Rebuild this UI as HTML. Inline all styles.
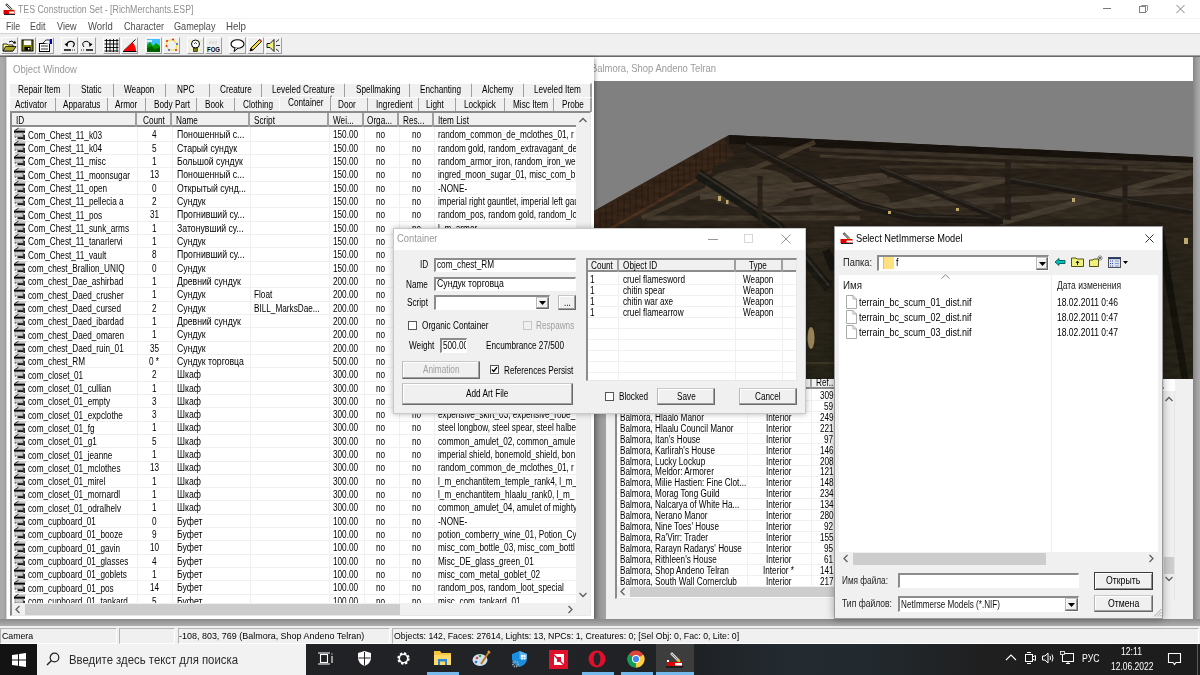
<!DOCTYPE html><html><head><meta charset="utf-8"><style>
html,body{margin:0;padding:0;width:1200px;height:675px;overflow:hidden;background:#ababab;font-family:"Liberation Sans",sans-serif;}
div,svg{position:absolute;}
.t{position:absolute;white-space:nowrap;line-height:1;transform-origin:0 0;}
svg{position:absolute;overflow:visible}
</style></head><body>
<div style="left:0px;top:0px;width:1200px;height:18px;background:#fff"></div>
<svg style="left:3px;top:3px" width="13" height="12" viewBox="0 0 13 12">
<path d="M3 1 L9 7" stroke="#333" stroke-width="2.2"/><path d="M3.5 1.5 L8.5 6.5" stroke="#ddd" stroke-width="1"/>
<path d="M8 6 L10 8" stroke="#cc0" stroke-width="1.5"/>
<rect x="0.5" y="7" width="11" height="4" fill="#e00000"/><rect x="6" y="8.5" width="5" height="2" fill="#fff"/>
<path d="M1 11.5 L12 11.5" stroke="#222" stroke-width="1"/></svg>
<div class="t" style="left:17.50px;top:4.11px;font-size:10.5px;color:#8f8f8f;transform:scaleX(0.8352);">TES Construction Set - [RichMerchants.ESP]</div>
<div style="left:1103px;top:8px;width:8px;height:1px;background:#7a7a7a"></div>
<svg style="left:1139px;top:5px" width="9" height="8" viewBox="0 0 9 8"><rect x="0.5" y="1.5" width="6" height="6" fill="none" stroke="#808080"/><path d="M1.5 1.5 L2.5 0.5 H8.5 V5.5 L6.5 7.5" fill="none" stroke="#909090"/></svg>
<svg style="left:1176px;top:5px" width="9" height="8" viewBox="0 0 9 8"><path d="M0.5 0 L8.5 8 M8.5 0 L0.5 8" stroke="#808080" stroke-width="1"/></svg>
<div style="left:0px;top:18px;width:1200px;height:1px;background:#f3f3f3"></div>
<div style="left:0px;top:19px;width:1200px;height:14px;background:#fff"></div>
<div class="t" style="left:5.60px;top:20.91px;font-size:10.5px;color:#4c4c4c;transform:scaleX(0.8281);">File</div>
<div class="t" style="left:30.40px;top:20.91px;font-size:10.5px;color:#4c4c4c;transform:scaleX(0.8566);">Edit</div>
<div class="t" style="left:57.00px;top:20.91px;font-size:10.5px;color:#4c4c4c;transform:scaleX(0.8643);">View</div>
<div class="t" style="left:87.50px;top:20.91px;font-size:10.5px;color:#4c4c4c;transform:scaleX(0.9069);">World</div>
<div class="t" style="left:123.60px;top:20.91px;font-size:10.5px;color:#4c4c4c;transform:scaleX(0.8672);">Character</div>
<div class="t" style="left:174.20px;top:20.91px;font-size:10.5px;color:#4c4c4c;transform:scaleX(0.8668);">Gameplay</div>
<div class="t" style="left:226.20px;top:20.91px;font-size:10.5px;color:#4c4c4c;transform:scaleX(0.9262);">Help</div>
<div style="left:0px;top:33px;width:1200px;height:1px;background:#d4d4d4"></div>
<div style="left:0px;top:34px;width:1200px;height:22px;background:#f0f0f0"></div>
<div style="left:0px;top:55px;width:1200px;height:1px;background:#a0a0a0"></div>
<div style="left:0px;top:56px;width:1200px;height:1px;background:#696969"></div>
<div style="left:1px;top:37px;width:17px;height:17px;box-sizing:border-box;border-top:1px solid #fff;border-left:1px solid #fff;border-right:1px solid #a0a0a0;border-bottom:1px solid #a0a0a0;background:#f0f0f0"></div>
<div style="left:19px;top:37px;width:17px;height:17px;box-sizing:border-box;border-top:1px solid #fff;border-left:1px solid #fff;border-right:1px solid #a0a0a0;border-bottom:1px solid #a0a0a0;background:#f0f0f0"></div>
<div style="left:37px;top:37px;width:17px;height:17px;box-sizing:border-box;border-top:1px solid #fff;border-left:1px solid #fff;border-right:1px solid #a0a0a0;border-bottom:1px solid #a0a0a0;background:#f0f0f0"></div>
<div style="left:61px;top:37px;width:17px;height:17px;box-sizing:border-box;border-top:1px solid #fff;border-left:1px solid #fff;border-right:1px solid #a0a0a0;border-bottom:1px solid #a0a0a0;background:#f0f0f0"></div>
<div style="left:79px;top:37px;width:17px;height:17px;box-sizing:border-box;border-top:1px solid #fff;border-left:1px solid #fff;border-right:1px solid #a0a0a0;border-bottom:1px solid #a0a0a0;background:#f0f0f0"></div>
<div style="left:103px;top:37px;width:17px;height:17px;box-sizing:border-box;border-top:1px solid #fff;border-left:1px solid #fff;border-right:1px solid #a0a0a0;border-bottom:1px solid #a0a0a0;background:#f0f0f0"></div>
<div style="left:121px;top:37px;width:17px;height:17px;box-sizing:border-box;border-top:1px solid #fff;border-left:1px solid #fff;border-right:1px solid #a0a0a0;border-bottom:1px solid #a0a0a0;background:#f0f0f0"></div>
<div style="left:145px;top:37px;width:17px;height:17px;box-sizing:border-box;border-top:1px solid #fff;border-left:1px solid #fff;border-right:1px solid #a0a0a0;border-bottom:1px solid #a0a0a0;background:#f0f0f0"></div>
<div style="left:163px;top:37px;width:17px;height:17px;box-sizing:border-box;border-top:1px solid #fff;border-left:1px solid #fff;border-right:1px solid #a0a0a0;border-bottom:1px solid #a0a0a0;background:#f0f0f0"></div>
<div style="left:187px;top:37px;width:17px;height:17px;box-sizing:border-box;border-top:1px solid #fff;border-left:1px solid #fff;border-right:1px solid #a0a0a0;border-bottom:1px solid #a0a0a0;background:#f0f0f0"></div>
<div style="left:205px;top:37px;width:17px;height:17px;box-sizing:border-box;border-top:1px solid #fff;border-left:1px solid #fff;border-right:1px solid #a0a0a0;border-bottom:1px solid #a0a0a0;background:#f0f0f0"></div>
<div style="left:229px;top:37px;width:17px;height:17px;box-sizing:border-box;border-top:1px solid #fff;border-left:1px solid #fff;border-right:1px solid #a0a0a0;border-bottom:1px solid #a0a0a0;background:#f0f0f0"></div>
<div style="left:247px;top:37px;width:17px;height:17px;box-sizing:border-box;border-top:1px solid #fff;border-left:1px solid #fff;border-right:1px solid #a0a0a0;border-bottom:1px solid #a0a0a0;background:#f0f0f0"></div>
<div style="left:265px;top:37px;width:17px;height:17px;box-sizing:border-box;border-top:1px solid #fff;border-left:1px solid #fff;border-right:1px solid #a0a0a0;border-bottom:1px solid #a0a0a0;background:#f0f0f0"></div>
<svg style="left:2px;top:38px" width="15" height="15" viewBox="0 0 15 15"><path d="M1 6 H5 L6 7 H11 V13 H1Z" fill="#ffff80" stroke="#000" stroke-width=".8"/><path d="M1 13 L3.5 8.5 H14 L11 13Z" fill="#a8a830" stroke="#000" stroke-width=".8"/><path d="M7 4 Q10 1.5 12.5 5" fill="none" stroke="#000" stroke-width="1"/><path d="M11 5.5 L14 5.5 L13 2.5Z" fill="#000"/></svg>
<svg style="left:20px;top:38px" width="15" height="15" viewBox="0 0 15 15"><rect x="2" y="2" width="11" height="11" fill="#808000" stroke="#000" stroke-width="1"/><rect x="4" y="2.5" width="7" height="4.5" fill="#fff"/><rect x="4.5" y="9" width="6" height="3.5" fill="#000"/><rect x="8" y="10" width="1.5" height="1.5" fill="#fff"/></svg>
<svg style="left:38px;top:38px" width="15" height="15" viewBox="0 0 15 15"><rect x="1.5" y="5.5" width="10" height="8" fill="#fff" stroke="#000" stroke-width="1"/><path d="M3 8 H10 M3 11 H10" stroke="#000" stroke-width=".8"/><path d="M5 5 L8 2 H12 V6" fill="#fff" stroke="#000" stroke-width=".8"/><rect x="12" y="1" width="2" height="5" fill="#0000c0"/></svg>
<svg style="left:62px;top:38px" width="15" height="15" viewBox="0 0 15 15"><path d="M4.5 7 Q6 2.5 10 3.5 Q14 5 11 9" fill="none" stroke="#000" stroke-width="1.2"/><path d="M2.5 6 L5.5 9 L6 5Z" fill="#000"/><path d="M2 12 H9" stroke="#000" stroke-width="1.5"/><path d="M10 12 H14" stroke="#000" stroke-width=".8" stroke-dasharray="1 1"/></svg>
<svg style="left:80px;top:38px" width="15" height="15" viewBox="0 0 15 15"><path d="M10.5 7 Q9 2.5 5 3.5 Q1 5 4 9" fill="none" stroke="#000" stroke-width="1"/><path d="M12.5 6 L9.5 9 L9 5Z" fill="#000"/><path d="M6 12 H13" stroke="#000" stroke-width="1.5"/><path d="M1 12 H5" stroke="#000" stroke-width=".8" stroke-dasharray="1 1"/></svg>
<svg style="left:104px;top:38px" width="15" height="15" viewBox="0 0 15 15"><path d="M2.5 1 V14 M6 1 V14 M9.5 1 V14 M13 1 V14 M0.5 2.5 H14.5 M0.5 6 H14.5 M0.5 9.5 H14.5 M0.5 13 H14.5" stroke="#000" stroke-width=".9"/></svg>
<svg style="left:122px;top:38px" width="15" height="15" viewBox="0 0 15 15"><path d="M1.5 13 L13.5 1.5" stroke="#000" stroke-width="1"/><path d="M1.5 13 H14 A12.5 12.5 0 0 0 10.5 4.5Z" fill="#ff0000"/><path d="M1 13.5 H14.5" stroke="#000" stroke-width="1"/></svg>
<svg style="left:146px;top:38px" width="15" height="15" viewBox="0 0 15 15"><rect x="1" y="1" width="13" height="13" fill="#40c0ff"/><path d="M1 14 V7 L4 4 L7 8 L10 5 L14 8 V14Z" fill="#00a000"/><path d="M1 14 V10 L5 8 L9 11 L14 9 V14Z" fill="#006000"/><path d="M1 3 H6" stroke="#fff" stroke-width="1.5"/></svg>
<svg style="left:164px;top:38px" width="15" height="15" viewBox="0 0 15 15"><path d="M3 3 L9 1.5 L13 6 L12 12 L5 12 L2.5 8Z" fill="none" stroke="#f0e040" stroke-width="1.2"/><circle cx="3" cy="3" r="1" fill="#f02020"/><circle cx="9" cy="1.5" r="1" fill="#f02020"/><circle cx="13" cy="6" r="1" fill="#3060f0"/><circle cx="12" cy="12" r="1" fill="#f02020"/><circle cx="5" cy="12" r="1" fill="#3060f0"/><circle cx="2.5" cy="8" r="1" fill="#f02020"/></svg>
<svg style="left:188px;top:38px" width="15" height="15" viewBox="0 0 15 15"><path d="M1 2 L3 4 M14 2 L12 4 M1 13 L3 11 M14 13 L12 11" stroke="#f0f060" stroke-width="1"/><circle cx="7.5" cy="6" r="4" fill="#fff" stroke="#000" stroke-width="1"/><path d="M6 6 Q7.5 3 9 6" fill="none" stroke="#000" stroke-width=".7"/><rect x="5.5" y="10" width="4" height="3.5" fill="#808000" stroke="#000" stroke-width=".6"/></svg>
<svg style="left:206px;top:38px" width="15" height="15" viewBox="0 0 15 15"><path d="M3 6 L5 3 M6 6 L8 3 M9 6 L11 3" stroke="#d8d8d8" stroke-width="1.5"/><text x="7.5" y="14" font-family="Liberation Sans" font-size="7.5" font-weight="bold" text-anchor="middle" fill="#000" textLength="13" lengthAdjust="spacingAndGlyphs">FOG</text></svg>
<svg style="left:230px;top:38px" width="15" height="15" viewBox="0 0 15 15"><ellipse cx="7.5" cy="6" rx="6.5" ry="4.3" fill="#fff" stroke="#000" stroke-width="1.1"/><path d="M5 10 L4 13.5 L8 10.2" fill="#fff" stroke="#000" stroke-width="1"/></svg>
<svg style="left:248px;top:38px" width="15" height="15" viewBox="0 0 15 15"><path d="M2 13 L3 10 L11.5 1.5 L13.5 3.5 L5 12Z" fill="#f0e030" stroke="#000" stroke-width=".9"/><path d="M11.5 1.5 L13.5 3.5" stroke="#d02020" stroke-width="1.5"/><path d="M2 13 L3 10 L5 12Z" fill="#000"/></svg>
<svg style="left:266px;top:38px" width="15" height="15" viewBox="0 0 15 15"><path d="M1 5.5 H4 L8 1.5 V13.5 L4 9.5 H1Z" fill="#f0f080" stroke="#000" stroke-width=".9"/><path d="M10 4 L13 1.5 M10 7.5 H14 M10 11 L13 13.5" stroke="#000" stroke-width=".8"/></svg>
<div style="left:0px;top:57px;width:1200px;height:570px;background:#ababab"></div>
<div style="left:592px;top:81px;width:15px;height:546px;background:linear-gradient(90deg,#7d7d7d,#9a9a9a 60%,#a6a6a6)"></div>
<div style="left:1193px;top:57px;width:7px;height:570px;background:linear-gradient(90deg,#858585,#a0a0a0 60%,#acacac)"></div>
<div style="left:581px;top:57px;width:612px;height:24px;background:#fff"></div>
<div class="t" style="left:590.50px;top:63.41px;font-size:10.5px;color:#9a9a9a;transform:scaleX(0.8968);">Balmora, Shop Andeno Telran</div>
<div style="left:594px;top:81px;width:599px;height:298px;background:#808080"></div>
<div style="left:606px;top:379px;width:587px;height:241px;background:#f0f0f0"></div>
<div style="left:6px;top:57px;width:588px;height:562px;background:#fff;box-shadow:1px 1px 4px rgba(0,0,0,.35)"></div>
<div style="left:6px;top:57px;width:1px;height:562px;background:#d9d9d9"></div>
<div class="t" style="left:13.00px;top:63.71px;font-size:10.5px;color:#999;transform:scaleX(0.9062);">Object Window</div>
<div style="left:7px;top:81px;width:587px;height:538px;background:#fff"></div>
<div style="left:10px;top:83px;width:61px;height:14px;box-sizing:border-box;background:#f0f0f0;border-top:1px solid #fff;border-right:2px solid #a0a0a0"></div>
<div class="t" style="left:18.00px;top:84.83px;font-size:10px;color:#000;transform:scaleX(0.8200);">Repair Item</div>
<div style="left:70px;top:83px;width:45px;height:14px;box-sizing:border-box;background:#f0f0f0;border-top:1px solid #fff;border-right:2px solid #a0a0a0"></div>
<div class="t" style="left:80.50px;top:84.83px;font-size:10px;color:#000;transform:scaleX(0.8200);">Static</div>
<div style="left:114px;top:83px;width:53px;height:14px;box-sizing:border-box;background:#f0f0f0;border-top:1px solid #fff;border-right:2px solid #a0a0a0"></div>
<div class="t" style="left:124.00px;top:84.83px;font-size:10px;color:#000;transform:scaleX(0.8200);">Weapon</div>
<div style="left:166px;top:83px;width:45px;height:14px;box-sizing:border-box;background:#f0f0f0;border-top:1px solid #fff;border-right:2px solid #a0a0a0"></div>
<div class="t" style="left:176.50px;top:84.83px;font-size:10px;color:#000;transform:scaleX(0.8200);">NPC</div>
<div style="left:210px;top:83px;width:53px;height:14px;box-sizing:border-box;background:#f0f0f0;border-top:1px solid #fff;border-right:2px solid #a0a0a0"></div>
<div class="t" style="left:220.00px;top:84.83px;font-size:10px;color:#000;transform:scaleX(0.8200);">Creature</div>
<div style="left:262px;top:83px;width:84px;height:14px;box-sizing:border-box;background:#f0f0f0;border-top:1px solid #fff;border-right:2px solid #a0a0a0"></div>
<div class="t" style="left:272.00px;top:84.83px;font-size:10px;color:#000;transform:scaleX(0.8200);">Leveled Creature</div>
<div style="left:345px;top:83px;width:66px;height:14px;box-sizing:border-box;background:#f0f0f0;border-top:1px solid #fff;border-right:2px solid #a0a0a0"></div>
<div class="t" style="left:355.50px;top:84.83px;font-size:10px;color:#000;transform:scaleX(0.8200);">Spellmaking</div>
<div style="left:410px;top:83px;width:63px;height:14px;box-sizing:border-box;background:#f0f0f0;border-top:1px solid #fff;border-right:2px solid #a0a0a0"></div>
<div class="t" style="left:420.00px;top:84.83px;font-size:10px;color:#000;transform:scaleX(0.8200);">Enchanting</div>
<div style="left:472px;top:83px;width:53px;height:14px;box-sizing:border-box;background:#f0f0f0;border-top:1px solid #fff;border-right:2px solid #a0a0a0"></div>
<div class="t" style="left:482.00px;top:84.83px;font-size:10px;color:#000;transform:scaleX(0.8200);">Alchemy</div>
<div style="left:524px;top:83px;width:68px;height:14px;box-sizing:border-box;background:#f0f0f0;border-top:1px solid #fff;border-right:2px solid #a0a0a0"></div>
<div class="t" style="left:534.00px;top:84.83px;font-size:10px;color:#000;transform:scaleX(0.8200);">Leveled Item</div>
<div style="left:10px;top:97px;width:47px;height:15px;box-sizing:border-box;background:#f0f0f0;border-top:1px solid #fff;border-right:2px solid #a0a0a0"></div>
<div class="t" style="left:15.00px;top:99.53px;font-size:10px;color:#000;transform:scaleX(0.8200);">Activator</div>
<div style="left:56px;top:97px;width:53px;height:15px;box-sizing:border-box;background:#f0f0f0;border-top:1px solid #fff;border-right:2px solid #a0a0a0"></div>
<div class="t" style="left:63.00px;top:99.53px;font-size:10px;color:#000;transform:scaleX(0.8200);">Apparatus</div>
<div style="left:108px;top:97px;width:39px;height:15px;box-sizing:border-box;background:#f0f0f0;border-top:1px solid #fff;border-right:2px solid #a0a0a0"></div>
<div class="t" style="left:115.00px;top:99.53px;font-size:10px;color:#000;transform:scaleX(0.8200);">Armor</div>
<div style="left:146px;top:97px;width:52px;height:15px;box-sizing:border-box;background:#f0f0f0;border-top:1px solid #fff;border-right:2px solid #a0a0a0"></div>
<div class="t" style="left:154.00px;top:99.53px;font-size:10px;color:#000;transform:scaleX(0.8200);">Body Part</div>
<div style="left:197px;top:97px;width:39px;height:15px;box-sizing:border-box;background:#f0f0f0;border-top:1px solid #fff;border-right:2px solid #a0a0a0"></div>
<div class="t" style="left:204.50px;top:99.53px;font-size:10px;color:#000;transform:scaleX(0.8200);">Book</div>
<div style="left:235px;top:97px;width:46px;height:15px;box-sizing:border-box;background:#f0f0f0;border-top:1px solid #fff;border-right:2px solid #a0a0a0"></div>
<div class="t" style="left:243.00px;top:99.53px;font-size:10px;color:#000;transform:scaleX(0.8200);">Clothing</div>
<div style="left:279px;top:95px;width:53px;height:17px;box-sizing:border-box;background:#f0f0f0;border-top:1px solid #fff;border-left:1px solid #fff;border-right:2px solid #a0a0a0"></div>
<div class="t" style="left:287.50px;top:97.53px;font-size:10px;color:#000;transform:scaleX(0.8200);">Container</div>
<div style="left:331px;top:97px;width:38px;height:15px;box-sizing:border-box;background:#f0f0f0;border-top:1px solid #fff;border-right:2px solid #a0a0a0"></div>
<div class="t" style="left:337.50px;top:99.53px;font-size:10px;color:#000;transform:scaleX(0.8200);">Door</div>
<div style="left:368px;top:97px;width:52px;height:15px;box-sizing:border-box;background:#f0f0f0;border-top:1px solid #fff;border-right:2px solid #a0a0a0"></div>
<div class="t" style="left:375.50px;top:99.53px;font-size:10px;color:#000;transform:scaleX(0.8200);">Ingredient</div>
<div style="left:419px;top:97px;width:38px;height:15px;box-sizing:border-box;background:#f0f0f0;border-top:1px solid #fff;border-right:2px solid #a0a0a0"></div>
<div class="t" style="left:426.00px;top:99.53px;font-size:10px;color:#000;transform:scaleX(0.8200);">Light</div>
<div style="left:456px;top:97px;width:50px;height:15px;box-sizing:border-box;background:#f0f0f0;border-top:1px solid #fff;border-right:2px solid #a0a0a0"></div>
<div class="t" style="left:464.00px;top:99.53px;font-size:10px;color:#000;transform:scaleX(0.8200);">Lockpick</div>
<div style="left:505px;top:97px;width:50px;height:15px;box-sizing:border-box;background:#f0f0f0;border-top:1px solid #fff;border-right:2px solid #a0a0a0"></div>
<div class="t" style="left:512.50px;top:99.53px;font-size:10px;color:#000;transform:scaleX(0.8200);">Misc Item</div>
<div style="left:554px;top:97px;width:38px;height:15px;box-sizing:border-box;background:#f0f0f0;border-top:1px solid #fff;border-right:2px solid #a0a0a0"></div>
<div class="t" style="left:561.50px;top:99.53px;font-size:10px;color:#000;transform:scaleX(0.8200);">Probe</div>
<div style="left:10px;top:111px;width:581px;height:505px;box-sizing:border-box;background:#fff;border-top:2px solid #8c8c8c;border-left:2px solid #8c8c8c;border-right:1px solid #e8e8e8;border-bottom:1px solid #e8e8e8"></div>
<div style="left:12px;top:113px;width:564px;height:14px;background:#f0f0f0;box-sizing:border-box;border-bottom:2px solid #8c8c8c"></div>
<div style="left:135px;top:113px;width:2px;height:14px;background:#a0a0a0"></div>
<div style="left:170px;top:113px;width:2px;height:14px;background:#a0a0a0"></div>
<div style="left:248px;top:113px;width:2px;height:14px;background:#a0a0a0"></div>
<div style="left:327px;top:113px;width:2px;height:14px;background:#a0a0a0"></div>
<div style="left:361.5px;top:113px;width:2px;height:14px;background:#a0a0a0"></div>
<div style="left:396.5px;top:113px;width:2px;height:14px;background:#a0a0a0"></div>
<div style="left:432px;top:113px;width:2px;height:14px;background:#a0a0a0"></div>
<div class="t" style="left:16.00px;top:115.63px;font-size:10px;color:#000;transform:scaleX(0.8200);">ID</div>
<div class="t" style="left:143.00px;top:115.63px;font-size:10px;color:#000;transform:scaleX(0.8200);">Count</div>
<div class="t" style="left:176.00px;top:115.63px;font-size:10px;color:#000;transform:scaleX(0.8200);">Name</div>
<div class="t" style="left:254.00px;top:115.63px;font-size:10px;color:#000;transform:scaleX(0.8200);">Script</div>
<div class="t" style="left:333.00px;top:115.63px;font-size:10px;color:#000;transform:scaleX(0.8200);">Wei...</div>
<div class="t" style="left:367.00px;top:115.63px;font-size:10px;color:#000;transform:scaleX(0.8200);">Orga...</div>
<div class="t" style="left:402.50px;top:115.63px;font-size:10px;color:#000;transform:scaleX(0.8200);">Res...</div>
<div class="t" style="left:438.00px;top:115.63px;font-size:10px;color:#000;transform:scaleX(0.8200);">Item List</div>
<div style="left:12px;top:127px;width:564px;height:476px;overflow:hidden">
<div style="left:-12px;top:-127px;width:1200px;height:675px">
<div style="left:12px;top:140.82px;width:564px;height:1px;background:#f0f0f0"></div>
<div style="left:12px;top:154.14px;width:564px;height:1px;background:#f0f0f0"></div>
<div style="left:12px;top:167.46px;width:564px;height:1px;background:#f0f0f0"></div>
<div style="left:12px;top:180.78px;width:564px;height:1px;background:#f0f0f0"></div>
<div style="left:12px;top:194.1px;width:564px;height:1px;background:#f0f0f0"></div>
<div style="left:12px;top:207.42px;width:564px;height:1px;background:#f0f0f0"></div>
<div style="left:12px;top:220.74px;width:564px;height:1px;background:#f0f0f0"></div>
<div style="left:12px;top:234.06px;width:564px;height:1px;background:#f0f0f0"></div>
<div style="left:12px;top:247.38px;width:564px;height:1px;background:#f0f0f0"></div>
<div style="left:12px;top:260.7px;width:564px;height:1px;background:#f0f0f0"></div>
<div style="left:12px;top:274.02px;width:564px;height:1px;background:#f0f0f0"></div>
<div style="left:12px;top:287.34px;width:564px;height:1px;background:#f0f0f0"></div>
<div style="left:12px;top:300.66px;width:564px;height:1px;background:#f0f0f0"></div>
<div style="left:12px;top:313.98px;width:564px;height:1px;background:#f0f0f0"></div>
<div style="left:12px;top:327.3px;width:564px;height:1px;background:#f0f0f0"></div>
<div style="left:12px;top:340.62px;width:564px;height:1px;background:#f0f0f0"></div>
<div style="left:12px;top:353.94px;width:564px;height:1px;background:#f0f0f0"></div>
<div style="left:12px;top:367.26px;width:564px;height:1px;background:#f0f0f0"></div>
<div style="left:12px;top:380.58px;width:564px;height:1px;background:#f0f0f0"></div>
<div style="left:12px;top:393.9px;width:564px;height:1px;background:#f0f0f0"></div>
<div style="left:12px;top:407.22px;width:564px;height:1px;background:#f0f0f0"></div>
<div style="left:12px;top:420.54px;width:564px;height:1px;background:#f0f0f0"></div>
<div style="left:12px;top:433.86px;width:564px;height:1px;background:#f0f0f0"></div>
<div style="left:12px;top:447.18px;width:564px;height:1px;background:#f0f0f0"></div>
<div style="left:12px;top:460.5px;width:564px;height:1px;background:#f0f0f0"></div>
<div style="left:12px;top:473.82px;width:564px;height:1px;background:#f0f0f0"></div>
<div style="left:12px;top:487.14px;width:564px;height:1px;background:#f0f0f0"></div>
<div style="left:12px;top:500.46px;width:564px;height:1px;background:#f0f0f0"></div>
<div style="left:12px;top:513.78px;width:564px;height:1px;background:#f0f0f0"></div>
<div style="left:12px;top:527.1px;width:564px;height:1px;background:#f0f0f0"></div>
<div style="left:12px;top:540.42px;width:564px;height:1px;background:#f0f0f0"></div>
<div style="left:12px;top:553.74px;width:564px;height:1px;background:#f0f0f0"></div>
<div style="left:12px;top:567.06px;width:564px;height:1px;background:#f0f0f0"></div>
<div style="left:12px;top:580.38px;width:564px;height:1px;background:#f0f0f0"></div>
<div style="left:12px;top:593.7px;width:564px;height:1px;background:#f0f0f0"></div>
<div style="left:12px;top:607.02px;width:564px;height:1px;background:#f0f0f0"></div>
<div style="left:137px;top:127px;width:1px;height:476px;background:#f0f0f0"></div>
<div style="left:172px;top:127px;width:1px;height:476px;background:#f0f0f0"></div>
<div style="left:250px;top:127px;width:1px;height:476px;background:#f0f0f0"></div>
<div style="left:329px;top:127px;width:1px;height:476px;background:#f0f0f0"></div>
<div style="left:363.5px;top:127px;width:1px;height:476px;background:#f0f0f0"></div>
<div style="left:398.5px;top:127px;width:1px;height:476px;background:#f0f0f0"></div>
<div style="left:434px;top:127px;width:1px;height:476px;background:#f0f0f0"></div>
<svg style="left:14px;top:127.60px" width="12" height="13" viewBox="0 0 12 13"><path d="M0.5 2.6 L4.5 0.2 H11.5 V2.6Z" fill="#c4c4c4"/><path d="M0.5 2.6 L4.5 0.2" stroke="#222" stroke-width="1"/><rect x="0" y="2.6" width="11" height="2.2" fill="#050505"/><rect x="0.5" y="4.8" width="9.5" height="4.6" fill="#a9a9a9"/><rect x="1.5" y="5.4" width="6.5" height="2.4" fill="#d2d2d2"/><rect x="3.5" y="9.2" width="6" height="1.9" fill="#111"/><rect x="9.3" y="6.8" width="1.6" height="5.2" fill="#151515"/><rect x="1" y="11" width="8.3" height="1.8" fill="#c6c6c6"/><rect x="0.8" y="8.6" width="1" height="1" fill="#333"/></svg>
<div class="t" style="left:27.50px;top:130.84px;font-size:10px;color:#000;transform:scaleX(0.8200);">Com_Chest_11_k03</div>
<div class="t" style="left:152.22px;top:130.44px;font-size:10px;color:#000;transform:scaleX(0.8200);">4</div>
<div class="t" style="left:177.00px;top:130.44px;font-size:10px;color:#000;transform:scaleX(0.8700);">Поношенный с...</div>
<div class="t" style="left:333.00px;top:130.44px;font-size:10px;color:#000;transform:scaleX(0.8200);">150.00</div>
<div class="t" style="left:376.24px;top:130.44px;font-size:10px;color:#000;transform:scaleX(0.8200);">no</div>
<div class="t" style="left:411.64px;top:130.44px;font-size:10px;color:#000;transform:scaleX(0.8200);">no</div>
<div class="t" style="left:438.00px;top:130.44px;font-size:10px;color:#000;transform:scaleX(0.8200);">random_common_de_mclothes_01, r</div>
<svg style="left:14px;top:140.92px" width="12" height="13" viewBox="0 0 12 13"><path d="M0.5 2.6 L4.5 0.2 H11.5 V2.6Z" fill="#c4c4c4"/><path d="M0.5 2.6 L4.5 0.2" stroke="#222" stroke-width="1"/><rect x="0" y="2.6" width="11" height="2.2" fill="#050505"/><rect x="0.5" y="4.8" width="9.5" height="4.6" fill="#a9a9a9"/><rect x="1.5" y="5.4" width="6.5" height="2.4" fill="#d2d2d2"/><rect x="3.5" y="9.2" width="6" height="1.9" fill="#111"/><rect x="9.3" y="6.8" width="1.6" height="5.2" fill="#151515"/><rect x="1" y="11" width="8.3" height="1.8" fill="#c6c6c6"/><rect x="0.8" y="8.6" width="1" height="1" fill="#333"/></svg>
<div class="t" style="left:27.50px;top:144.16px;font-size:10px;color:#000;transform:scaleX(0.8200);">Com_Chest_11_k04</div>
<div class="t" style="left:152.22px;top:143.75px;font-size:10px;color:#000;transform:scaleX(0.8200);">5</div>
<div class="t" style="left:177.00px;top:143.75px;font-size:10px;color:#000;transform:scaleX(0.8700);">Старый сундук</div>
<div class="t" style="left:333.00px;top:143.75px;font-size:10px;color:#000;transform:scaleX(0.8200);">150.00</div>
<div class="t" style="left:376.24px;top:143.75px;font-size:10px;color:#000;transform:scaleX(0.8200);">no</div>
<div class="t" style="left:411.64px;top:143.75px;font-size:10px;color:#000;transform:scaleX(0.8200);">no</div>
<div class="t" style="left:438.00px;top:143.75px;font-size:10px;color:#000;transform:scaleX(0.8200);">random gold, random_extravagant_de</div>
<svg style="left:14px;top:154.24px" width="12" height="13" viewBox="0 0 12 13"><path d="M0.5 2.6 L4.5 0.2 H11.5 V2.6Z" fill="#c4c4c4"/><path d="M0.5 2.6 L4.5 0.2" stroke="#222" stroke-width="1"/><rect x="0" y="2.6" width="11" height="2.2" fill="#050505"/><rect x="0.5" y="4.8" width="9.5" height="4.6" fill="#a9a9a9"/><rect x="1.5" y="5.4" width="6.5" height="2.4" fill="#d2d2d2"/><rect x="3.5" y="9.2" width="6" height="1.9" fill="#111"/><rect x="9.3" y="6.8" width="1.6" height="5.2" fill="#151515"/><rect x="1" y="11" width="8.3" height="1.8" fill="#c6c6c6"/><rect x="0.8" y="8.6" width="1" height="1" fill="#333"/></svg>
<div class="t" style="left:27.50px;top:157.47px;font-size:10px;color:#000;transform:scaleX(0.8200);">Com_Chest_11_misc</div>
<div class="t" style="left:152.22px;top:157.07px;font-size:10px;color:#000;transform:scaleX(0.8200);">1</div>
<div class="t" style="left:177.00px;top:157.07px;font-size:10px;color:#000;transform:scaleX(0.8700);">Большой сундук</div>
<div class="t" style="left:333.00px;top:157.07px;font-size:10px;color:#000;transform:scaleX(0.8200);">150.00</div>
<div class="t" style="left:376.24px;top:157.07px;font-size:10px;color:#000;transform:scaleX(0.8200);">no</div>
<div class="t" style="left:411.64px;top:157.07px;font-size:10px;color:#000;transform:scaleX(0.8200);">no</div>
<div class="t" style="left:438.00px;top:157.07px;font-size:10px;color:#000;transform:scaleX(0.8200);">random_armor_iron, random_iron_we</div>
<svg style="left:14px;top:167.56px" width="12" height="13" viewBox="0 0 12 13"><path d="M0.5 2.6 L4.5 0.2 H11.5 V2.6Z" fill="#c4c4c4"/><path d="M0.5 2.6 L4.5 0.2" stroke="#222" stroke-width="1"/><rect x="0" y="2.6" width="11" height="2.2" fill="#050505"/><rect x="0.5" y="4.8" width="9.5" height="4.6" fill="#a9a9a9"/><rect x="1.5" y="5.4" width="6.5" height="2.4" fill="#d2d2d2"/><rect x="3.5" y="9.2" width="6" height="1.9" fill="#111"/><rect x="9.3" y="6.8" width="1.6" height="5.2" fill="#151515"/><rect x="1" y="11" width="8.3" height="1.8" fill="#c6c6c6"/><rect x="0.8" y="8.6" width="1" height="1" fill="#333"/></svg>
<div class="t" style="left:27.50px;top:170.80px;font-size:10px;color:#000;transform:scaleX(0.8200);">Com_Chest_11_moonsugar</div>
<div class="t" style="left:149.94px;top:170.40px;font-size:10px;color:#000;transform:scaleX(0.8200);">13</div>
<div class="t" style="left:177.00px;top:170.40px;font-size:10px;color:#000;transform:scaleX(0.8700);">Поношенный с...</div>
<div class="t" style="left:333.00px;top:170.40px;font-size:10px;color:#000;transform:scaleX(0.8200);">150.00</div>
<div class="t" style="left:376.24px;top:170.40px;font-size:10px;color:#000;transform:scaleX(0.8200);">no</div>
<div class="t" style="left:411.64px;top:170.40px;font-size:10px;color:#000;transform:scaleX(0.8200);">no</div>
<div class="t" style="left:438.00px;top:170.40px;font-size:10px;color:#000;transform:scaleX(0.8200);">ingred_moon_sugar_01, misc_com_b</div>
<svg style="left:14px;top:180.88px" width="12" height="13" viewBox="0 0 12 13"><path d="M0.5 2.6 L4.5 0.2 H11.5 V2.6Z" fill="#c4c4c4"/><path d="M0.5 2.6 L4.5 0.2" stroke="#222" stroke-width="1"/><rect x="0" y="2.6" width="11" height="2.2" fill="#050505"/><rect x="0.5" y="4.8" width="9.5" height="4.6" fill="#a9a9a9"/><rect x="1.5" y="5.4" width="6.5" height="2.4" fill="#d2d2d2"/><rect x="3.5" y="9.2" width="6" height="1.9" fill="#111"/><rect x="9.3" y="6.8" width="1.6" height="5.2" fill="#151515"/><rect x="1" y="11" width="8.3" height="1.8" fill="#c6c6c6"/><rect x="0.8" y="8.6" width="1" height="1" fill="#333"/></svg>
<div class="t" style="left:27.50px;top:184.12px;font-size:10px;color:#000;transform:scaleX(0.8200);">Com_Chest_11_open</div>
<div class="t" style="left:152.22px;top:183.72px;font-size:10px;color:#000;transform:scaleX(0.8200);">0</div>
<div class="t" style="left:177.00px;top:183.72px;font-size:10px;color:#000;transform:scaleX(0.8700);">Открытый сунд...</div>
<div class="t" style="left:333.00px;top:183.72px;font-size:10px;color:#000;transform:scaleX(0.8200);">150.00</div>
<div class="t" style="left:376.24px;top:183.72px;font-size:10px;color:#000;transform:scaleX(0.8200);">no</div>
<div class="t" style="left:411.64px;top:183.72px;font-size:10px;color:#000;transform:scaleX(0.8200);">no</div>
<div class="t" style="left:438.00px;top:183.72px;font-size:10px;color:#000;transform:scaleX(0.8200);">-NONE-</div>
<svg style="left:14px;top:194.20px" width="12" height="13" viewBox="0 0 12 13"><path d="M0.5 2.6 L4.5 0.2 H11.5 V2.6Z" fill="#c4c4c4"/><path d="M0.5 2.6 L4.5 0.2" stroke="#222" stroke-width="1"/><rect x="0" y="2.6" width="11" height="2.2" fill="#050505"/><rect x="0.5" y="4.8" width="9.5" height="4.6" fill="#a9a9a9"/><rect x="1.5" y="5.4" width="6.5" height="2.4" fill="#d2d2d2"/><rect x="3.5" y="9.2" width="6" height="1.9" fill="#111"/><rect x="9.3" y="6.8" width="1.6" height="5.2" fill="#151515"/><rect x="1" y="11" width="8.3" height="1.8" fill="#c6c6c6"/><rect x="0.8" y="8.6" width="1" height="1" fill="#333"/></svg>
<div class="t" style="left:27.50px;top:197.44px;font-size:10px;color:#000;transform:scaleX(0.8200);">Com_Chest_11_pellecia a</div>
<div class="t" style="left:152.22px;top:197.03px;font-size:10px;color:#000;transform:scaleX(0.8200);">2</div>
<div class="t" style="left:177.00px;top:197.03px;font-size:10px;color:#000;transform:scaleX(0.8700);">Сундук</div>
<div class="t" style="left:333.00px;top:197.03px;font-size:10px;color:#000;transform:scaleX(0.8200);">150.00</div>
<div class="t" style="left:376.24px;top:197.03px;font-size:10px;color:#000;transform:scaleX(0.8200);">no</div>
<div class="t" style="left:411.64px;top:197.03px;font-size:10px;color:#000;transform:scaleX(0.8200);">no</div>
<div class="t" style="left:438.00px;top:197.03px;font-size:10px;color:#000;transform:scaleX(0.8200);">imperial right gauntlet, imperial left gau</div>
<svg style="left:14px;top:207.52px" width="12" height="13" viewBox="0 0 12 13"><path d="M0.5 2.6 L4.5 0.2 H11.5 V2.6Z" fill="#c4c4c4"/><path d="M0.5 2.6 L4.5 0.2" stroke="#222" stroke-width="1"/><rect x="0" y="2.6" width="11" height="2.2" fill="#050505"/><rect x="0.5" y="4.8" width="9.5" height="4.6" fill="#a9a9a9"/><rect x="1.5" y="5.4" width="6.5" height="2.4" fill="#d2d2d2"/><rect x="3.5" y="9.2" width="6" height="1.9" fill="#111"/><rect x="9.3" y="6.8" width="1.6" height="5.2" fill="#151515"/><rect x="1" y="11" width="8.3" height="1.8" fill="#c6c6c6"/><rect x="0.8" y="8.6" width="1" height="1" fill="#333"/></svg>
<div class="t" style="left:27.50px;top:210.76px;font-size:10px;color:#000;transform:scaleX(0.8200);">Com_Chest_11_pos</div>
<div class="t" style="left:149.94px;top:210.36px;font-size:10px;color:#000;transform:scaleX(0.8200);">31</div>
<div class="t" style="left:177.00px;top:210.36px;font-size:10px;color:#000;transform:scaleX(0.8700);">Прогнивший су...</div>
<div class="t" style="left:333.00px;top:210.36px;font-size:10px;color:#000;transform:scaleX(0.8200);">150.00</div>
<div class="t" style="left:376.24px;top:210.36px;font-size:10px;color:#000;transform:scaleX(0.8200);">no</div>
<div class="t" style="left:411.64px;top:210.36px;font-size:10px;color:#000;transform:scaleX(0.8200);">no</div>
<div class="t" style="left:438.00px;top:210.36px;font-size:10px;color:#000;transform:scaleX(0.8200);">random_pos, random gold, random_lo</div>
<svg style="left:14px;top:220.84px" width="12" height="13" viewBox="0 0 12 13"><path d="M0.5 2.6 L4.5 0.2 H11.5 V2.6Z" fill="#c4c4c4"/><path d="M0.5 2.6 L4.5 0.2" stroke="#222" stroke-width="1"/><rect x="0" y="2.6" width="11" height="2.2" fill="#050505"/><rect x="0.5" y="4.8" width="9.5" height="4.6" fill="#a9a9a9"/><rect x="1.5" y="5.4" width="6.5" height="2.4" fill="#d2d2d2"/><rect x="3.5" y="9.2" width="6" height="1.9" fill="#111"/><rect x="9.3" y="6.8" width="1.6" height="5.2" fill="#151515"/><rect x="1" y="11" width="8.3" height="1.8" fill="#c6c6c6"/><rect x="0.8" y="8.6" width="1" height="1" fill="#333"/></svg>
<div class="t" style="left:27.50px;top:224.08px;font-size:10px;color:#000;transform:scaleX(0.8200);">Com_Chest_11_sunk_arms</div>
<div class="t" style="left:152.22px;top:223.68px;font-size:10px;color:#000;transform:scaleX(0.8200);">1</div>
<div class="t" style="left:177.00px;top:223.68px;font-size:10px;color:#000;transform:scaleX(0.8700);">Затонувший су...</div>
<div class="t" style="left:333.00px;top:223.68px;font-size:10px;color:#000;transform:scaleX(0.8200);">150.00</div>
<div class="t" style="left:376.24px;top:223.68px;font-size:10px;color:#000;transform:scaleX(0.8200);">no</div>
<div class="t" style="left:411.64px;top:223.68px;font-size:10px;color:#000;transform:scaleX(0.8200);">no</div>
<div class="t" style="left:438.00px;top:223.68px;font-size:10px;color:#000;transform:scaleX(0.8200);">l_m_armor</div>
<svg style="left:14px;top:234.16px" width="12" height="13" viewBox="0 0 12 13"><path d="M0.5 2.6 L4.5 0.2 H11.5 V2.6Z" fill="#c4c4c4"/><path d="M0.5 2.6 L4.5 0.2" stroke="#222" stroke-width="1"/><rect x="0" y="2.6" width="11" height="2.2" fill="#050505"/><rect x="0.5" y="4.8" width="9.5" height="4.6" fill="#a9a9a9"/><rect x="1.5" y="5.4" width="6.5" height="2.4" fill="#d2d2d2"/><rect x="3.5" y="9.2" width="6" height="1.9" fill="#111"/><rect x="9.3" y="6.8" width="1.6" height="5.2" fill="#151515"/><rect x="1" y="11" width="8.3" height="1.8" fill="#c6c6c6"/><rect x="0.8" y="8.6" width="1" height="1" fill="#333"/></svg>
<div class="t" style="left:27.50px;top:237.40px;font-size:10px;color:#000;transform:scaleX(0.8200);">Com_Chest_11_tanarlervi</div>
<div class="t" style="left:152.22px;top:237.00px;font-size:10px;color:#000;transform:scaleX(0.8200);">1</div>
<div class="t" style="left:177.00px;top:237.00px;font-size:10px;color:#000;transform:scaleX(0.8700);">Сундук</div>
<div class="t" style="left:333.00px;top:237.00px;font-size:10px;color:#000;transform:scaleX(0.8200);">150.00</div>
<div class="t" style="left:376.24px;top:237.00px;font-size:10px;color:#000;transform:scaleX(0.8200);">no</div>
<div class="t" style="left:411.64px;top:237.00px;font-size:10px;color:#000;transform:scaleX(0.8200);">no</div>
<svg style="left:14px;top:247.48px" width="12" height="13" viewBox="0 0 12 13"><path d="M0.5 2.6 L4.5 0.2 H11.5 V2.6Z" fill="#c4c4c4"/><path d="M0.5 2.6 L4.5 0.2" stroke="#222" stroke-width="1"/><rect x="0" y="2.6" width="11" height="2.2" fill="#050505"/><rect x="0.5" y="4.8" width="9.5" height="4.6" fill="#a9a9a9"/><rect x="1.5" y="5.4" width="6.5" height="2.4" fill="#d2d2d2"/><rect x="3.5" y="9.2" width="6" height="1.9" fill="#111"/><rect x="9.3" y="6.8" width="1.6" height="5.2" fill="#151515"/><rect x="1" y="11" width="8.3" height="1.8" fill="#c6c6c6"/><rect x="0.8" y="8.6" width="1" height="1" fill="#333"/></svg>
<div class="t" style="left:27.50px;top:250.71px;font-size:10px;color:#000;transform:scaleX(0.8200);">Com_Chest_11_vault</div>
<div class="t" style="left:152.22px;top:250.31px;font-size:10px;color:#000;transform:scaleX(0.8200);">8</div>
<div class="t" style="left:177.00px;top:250.31px;font-size:10px;color:#000;transform:scaleX(0.8700);">Прогнивший су...</div>
<div class="t" style="left:333.00px;top:250.31px;font-size:10px;color:#000;transform:scaleX(0.8200);">150.00</div>
<div class="t" style="left:376.24px;top:250.31px;font-size:10px;color:#000;transform:scaleX(0.8200);">no</div>
<div class="t" style="left:411.64px;top:250.31px;font-size:10px;color:#000;transform:scaleX(0.8200);">no</div>
<svg style="left:14px;top:260.80px" width="12" height="13" viewBox="0 0 12 13"><path d="M0.5 2.6 L4.5 0.2 H11.5 V2.6Z" fill="#c4c4c4"/><path d="M0.5 2.6 L4.5 0.2" stroke="#222" stroke-width="1"/><rect x="0" y="2.6" width="11" height="2.2" fill="#050505"/><rect x="0.5" y="4.8" width="9.5" height="4.6" fill="#a9a9a9"/><rect x="1.5" y="5.4" width="6.5" height="2.4" fill="#d2d2d2"/><rect x="3.5" y="9.2" width="6" height="1.9" fill="#111"/><rect x="9.3" y="6.8" width="1.6" height="5.2" fill="#151515"/><rect x="1" y="11" width="8.3" height="1.8" fill="#c6c6c6"/><rect x="0.8" y="8.6" width="1" height="1" fill="#333"/></svg>
<div class="t" style="left:27.50px;top:264.03px;font-size:10px;color:#000;transform:scaleX(0.8200);">com_chest_Brallion_UNIQ</div>
<div class="t" style="left:152.22px;top:263.63px;font-size:10px;color:#000;transform:scaleX(0.8200);">0</div>
<div class="t" style="left:177.00px;top:263.63px;font-size:10px;color:#000;transform:scaleX(0.8700);">Сундук</div>
<div class="t" style="left:333.00px;top:263.63px;font-size:10px;color:#000;transform:scaleX(0.8200);">150.00</div>
<div class="t" style="left:376.24px;top:263.63px;font-size:10px;color:#000;transform:scaleX(0.8200);">no</div>
<div class="t" style="left:411.64px;top:263.63px;font-size:10px;color:#000;transform:scaleX(0.8200);">no</div>
<svg style="left:14px;top:274.12px" width="12" height="13" viewBox="0 0 12 13"><path d="M0.5 2.6 L4.5 0.2 H11.5 V2.6Z" fill="#c4c4c4"/><path d="M0.5 2.6 L4.5 0.2" stroke="#222" stroke-width="1"/><rect x="0" y="2.6" width="11" height="2.2" fill="#050505"/><rect x="0.5" y="4.8" width="9.5" height="4.6" fill="#a9a9a9"/><rect x="1.5" y="5.4" width="6.5" height="2.4" fill="#d2d2d2"/><rect x="3.5" y="9.2" width="6" height="1.9" fill="#111"/><rect x="9.3" y="6.8" width="1.6" height="5.2" fill="#151515"/><rect x="1" y="11" width="8.3" height="1.8" fill="#c6c6c6"/><rect x="0.8" y="8.6" width="1" height="1" fill="#333"/></svg>
<div class="t" style="left:27.50px;top:277.35px;font-size:10px;color:#000;transform:scaleX(0.8200);">com_chest_Dae_ashirbad</div>
<div class="t" style="left:152.22px;top:276.95px;font-size:10px;color:#000;transform:scaleX(0.8200);">1</div>
<div class="t" style="left:177.00px;top:276.95px;font-size:10px;color:#000;transform:scaleX(0.8700);">Древний сундук</div>
<div class="t" style="left:333.00px;top:276.95px;font-size:10px;color:#000;transform:scaleX(0.8200);">200.00</div>
<div class="t" style="left:376.24px;top:276.95px;font-size:10px;color:#000;transform:scaleX(0.8200);">no</div>
<div class="t" style="left:411.64px;top:276.95px;font-size:10px;color:#000;transform:scaleX(0.8200);">no</div>
<svg style="left:14px;top:287.44px" width="12" height="13" viewBox="0 0 12 13"><path d="M0.5 2.6 L4.5 0.2 H11.5 V2.6Z" fill="#c4c4c4"/><path d="M0.5 2.6 L4.5 0.2" stroke="#222" stroke-width="1"/><rect x="0" y="2.6" width="11" height="2.2" fill="#050505"/><rect x="0.5" y="4.8" width="9.5" height="4.6" fill="#a9a9a9"/><rect x="1.5" y="5.4" width="6.5" height="2.4" fill="#d2d2d2"/><rect x="3.5" y="9.2" width="6" height="1.9" fill="#111"/><rect x="9.3" y="6.8" width="1.6" height="5.2" fill="#151515"/><rect x="1" y="11" width="8.3" height="1.8" fill="#c6c6c6"/><rect x="0.8" y="8.6" width="1" height="1" fill="#333"/></svg>
<div class="t" style="left:27.50px;top:290.68px;font-size:10px;color:#000;transform:scaleX(0.8200);">com_chest_Daed_crusher</div>
<div class="t" style="left:152.22px;top:290.28px;font-size:10px;color:#000;transform:scaleX(0.8200);">1</div>
<div class="t" style="left:177.00px;top:290.28px;font-size:10px;color:#000;transform:scaleX(0.8700);">Сундук</div>
<div class="t" style="left:254.00px;top:290.28px;font-size:10px;color:#000;transform:scaleX(0.8200);">Float</div>
<div class="t" style="left:333.00px;top:290.28px;font-size:10px;color:#000;transform:scaleX(0.8200);">200.00</div>
<div class="t" style="left:376.24px;top:290.28px;font-size:10px;color:#000;transform:scaleX(0.8200);">no</div>
<div class="t" style="left:411.64px;top:290.28px;font-size:10px;color:#000;transform:scaleX(0.8200);">no</div>
<svg style="left:14px;top:300.76px" width="12" height="13" viewBox="0 0 12 13"><path d="M0.5 2.6 L4.5 0.2 H11.5 V2.6Z" fill="#c4c4c4"/><path d="M0.5 2.6 L4.5 0.2" stroke="#222" stroke-width="1"/><rect x="0" y="2.6" width="11" height="2.2" fill="#050505"/><rect x="0.5" y="4.8" width="9.5" height="4.6" fill="#a9a9a9"/><rect x="1.5" y="5.4" width="6.5" height="2.4" fill="#d2d2d2"/><rect x="3.5" y="9.2" width="6" height="1.9" fill="#111"/><rect x="9.3" y="6.8" width="1.6" height="5.2" fill="#151515"/><rect x="1" y="11" width="8.3" height="1.8" fill="#c6c6c6"/><rect x="0.8" y="8.6" width="1" height="1" fill="#333"/></svg>
<div class="t" style="left:27.50px;top:303.99px;font-size:10px;color:#000;transform:scaleX(0.8200);">com_chest_Daed_cursed</div>
<div class="t" style="left:152.22px;top:303.59px;font-size:10px;color:#000;transform:scaleX(0.8200);">2</div>
<div class="t" style="left:177.00px;top:303.59px;font-size:10px;color:#000;transform:scaleX(0.8700);">Сундук</div>
<div class="t" style="left:254.00px;top:303.59px;font-size:10px;color:#000;transform:scaleX(0.8200);">BILL_MarksDae...</div>
<div class="t" style="left:333.00px;top:303.59px;font-size:10px;color:#000;transform:scaleX(0.8200);">200.00</div>
<div class="t" style="left:376.24px;top:303.59px;font-size:10px;color:#000;transform:scaleX(0.8200);">no</div>
<div class="t" style="left:411.64px;top:303.59px;font-size:10px;color:#000;transform:scaleX(0.8200);">no</div>
<svg style="left:14px;top:314.08px" width="12" height="13" viewBox="0 0 12 13"><path d="M0.5 2.6 L4.5 0.2 H11.5 V2.6Z" fill="#c4c4c4"/><path d="M0.5 2.6 L4.5 0.2" stroke="#222" stroke-width="1"/><rect x="0" y="2.6" width="11" height="2.2" fill="#050505"/><rect x="0.5" y="4.8" width="9.5" height="4.6" fill="#a9a9a9"/><rect x="1.5" y="5.4" width="6.5" height="2.4" fill="#d2d2d2"/><rect x="3.5" y="9.2" width="6" height="1.9" fill="#111"/><rect x="9.3" y="6.8" width="1.6" height="5.2" fill="#151515"/><rect x="1" y="11" width="8.3" height="1.8" fill="#c6c6c6"/><rect x="0.8" y="8.6" width="1" height="1" fill="#333"/></svg>
<div class="t" style="left:27.50px;top:317.31px;font-size:10px;color:#000;transform:scaleX(0.8200);">com_chest_Daed_ibardad</div>
<div class="t" style="left:152.22px;top:316.92px;font-size:10px;color:#000;transform:scaleX(0.8200);">1</div>
<div class="t" style="left:177.00px;top:316.92px;font-size:10px;color:#000;transform:scaleX(0.8700);">Древний сундук</div>
<div class="t" style="left:333.00px;top:316.92px;font-size:10px;color:#000;transform:scaleX(0.8200);">200.00</div>
<div class="t" style="left:376.24px;top:316.92px;font-size:10px;color:#000;transform:scaleX(0.8200);">no</div>
<div class="t" style="left:411.64px;top:316.92px;font-size:10px;color:#000;transform:scaleX(0.8200);">no</div>
<svg style="left:14px;top:327.40px" width="12" height="13" viewBox="0 0 12 13"><path d="M0.5 2.6 L4.5 0.2 H11.5 V2.6Z" fill="#c4c4c4"/><path d="M0.5 2.6 L4.5 0.2" stroke="#222" stroke-width="1"/><rect x="0" y="2.6" width="11" height="2.2" fill="#050505"/><rect x="0.5" y="4.8" width="9.5" height="4.6" fill="#a9a9a9"/><rect x="1.5" y="5.4" width="6.5" height="2.4" fill="#d2d2d2"/><rect x="3.5" y="9.2" width="6" height="1.9" fill="#111"/><rect x="9.3" y="6.8" width="1.6" height="5.2" fill="#151515"/><rect x="1" y="11" width="8.3" height="1.8" fill="#c6c6c6"/><rect x="0.8" y="8.6" width="1" height="1" fill="#333"/></svg>
<div class="t" style="left:27.50px;top:330.63px;font-size:10px;color:#000;transform:scaleX(0.8200);">com_chest_Daed_omaren</div>
<div class="t" style="left:152.22px;top:330.24px;font-size:10px;color:#000;transform:scaleX(0.8200);">1</div>
<div class="t" style="left:177.00px;top:330.24px;font-size:10px;color:#000;transform:scaleX(0.8700);">Сундук</div>
<div class="t" style="left:333.00px;top:330.24px;font-size:10px;color:#000;transform:scaleX(0.8200);">200.00</div>
<div class="t" style="left:376.24px;top:330.24px;font-size:10px;color:#000;transform:scaleX(0.8200);">no</div>
<div class="t" style="left:411.64px;top:330.24px;font-size:10px;color:#000;transform:scaleX(0.8200);">no</div>
<svg style="left:14px;top:340.72px" width="12" height="13" viewBox="0 0 12 13"><path d="M0.5 2.6 L4.5 0.2 H11.5 V2.6Z" fill="#c4c4c4"/><path d="M0.5 2.6 L4.5 0.2" stroke="#222" stroke-width="1"/><rect x="0" y="2.6" width="11" height="2.2" fill="#050505"/><rect x="0.5" y="4.8" width="9.5" height="4.6" fill="#a9a9a9"/><rect x="1.5" y="5.4" width="6.5" height="2.4" fill="#d2d2d2"/><rect x="3.5" y="9.2" width="6" height="1.9" fill="#111"/><rect x="9.3" y="6.8" width="1.6" height="5.2" fill="#151515"/><rect x="1" y="11" width="8.3" height="1.8" fill="#c6c6c6"/><rect x="0.8" y="8.6" width="1" height="1" fill="#333"/></svg>
<div class="t" style="left:27.50px;top:343.95px;font-size:10px;color:#000;transform:scaleX(0.8200);">com_chest_Daed_ruin_01</div>
<div class="t" style="left:149.94px;top:343.56px;font-size:10px;color:#000;transform:scaleX(0.8200);">35</div>
<div class="t" style="left:177.00px;top:343.56px;font-size:10px;color:#000;transform:scaleX(0.8700);">Сундук</div>
<div class="t" style="left:333.00px;top:343.56px;font-size:10px;color:#000;transform:scaleX(0.8200);">200.00</div>
<div class="t" style="left:376.24px;top:343.56px;font-size:10px;color:#000;transform:scaleX(0.8200);">no</div>
<div class="t" style="left:411.64px;top:343.56px;font-size:10px;color:#000;transform:scaleX(0.8200);">no</div>
<svg style="left:14px;top:354.04px" width="12" height="13" viewBox="0 0 12 13"><path d="M0.5 2.6 L4.5 0.2 H11.5 V2.6Z" fill="#c4c4c4"/><path d="M0.5 2.6 L4.5 0.2" stroke="#222" stroke-width="1"/><rect x="0" y="2.6" width="11" height="2.2" fill="#050505"/><rect x="0.5" y="4.8" width="9.5" height="4.6" fill="#a9a9a9"/><rect x="1.5" y="5.4" width="6.5" height="2.4" fill="#d2d2d2"/><rect x="3.5" y="9.2" width="6" height="1.9" fill="#111"/><rect x="9.3" y="6.8" width="1.6" height="5.2" fill="#151515"/><rect x="1" y="11" width="8.3" height="1.8" fill="#c6c6c6"/><rect x="0.8" y="8.6" width="1" height="1" fill="#333"/></svg>
<div class="t" style="left:27.50px;top:357.27px;font-size:10px;color:#000;transform:scaleX(0.8200);">com_chest_RM</div>
<div class="t" style="left:149.48px;top:356.88px;font-size:10px;color:#000;transform:scaleX(0.8200);">0 *</div>
<div class="t" style="left:177.00px;top:356.88px;font-size:10px;color:#000;transform:scaleX(0.8700);">Сундук торговца</div>
<div class="t" style="left:333.00px;top:356.88px;font-size:10px;color:#000;transform:scaleX(0.8200);">500.00</div>
<div class="t" style="left:376.24px;top:356.88px;font-size:10px;color:#000;transform:scaleX(0.8200);">no</div>
<div class="t" style="left:411.64px;top:356.88px;font-size:10px;color:#000;transform:scaleX(0.8200);">no</div>
<svg style="left:14px;top:367.36px" width="12" height="13" viewBox="0 0 12 13"><path d="M0.5 2.6 L4.5 0.2 H11.5 V2.6Z" fill="#c4c4c4"/><path d="M0.5 2.6 L4.5 0.2" stroke="#222" stroke-width="1"/><rect x="0" y="2.6" width="11" height="2.2" fill="#050505"/><rect x="0.5" y="4.8" width="9.5" height="4.6" fill="#a9a9a9"/><rect x="1.5" y="5.4" width="6.5" height="2.4" fill="#d2d2d2"/><rect x="3.5" y="9.2" width="6" height="1.9" fill="#111"/><rect x="9.3" y="6.8" width="1.6" height="5.2" fill="#151515"/><rect x="1" y="11" width="8.3" height="1.8" fill="#c6c6c6"/><rect x="0.8" y="8.6" width="1" height="1" fill="#333"/></svg>
<div class="t" style="left:27.50px;top:370.59px;font-size:10px;color:#000;transform:scaleX(0.8200);">com_closet_01</div>
<div class="t" style="left:152.22px;top:370.19px;font-size:10px;color:#000;transform:scaleX(0.8200);">2</div>
<div class="t" style="left:177.00px;top:370.19px;font-size:10px;color:#000;transform:scaleX(0.8700);">Шкаф</div>
<div class="t" style="left:333.00px;top:370.19px;font-size:10px;color:#000;transform:scaleX(0.8200);">300.00</div>
<div class="t" style="left:376.24px;top:370.19px;font-size:10px;color:#000;transform:scaleX(0.8200);">no</div>
<div class="t" style="left:411.64px;top:370.19px;font-size:10px;color:#000;transform:scaleX(0.8200);">no</div>
<svg style="left:14px;top:380.68px" width="12" height="13" viewBox="0 0 12 13"><path d="M0.5 2.6 L4.5 0.2 H11.5 V2.6Z" fill="#c4c4c4"/><path d="M0.5 2.6 L4.5 0.2" stroke="#222" stroke-width="1"/><rect x="0" y="2.6" width="11" height="2.2" fill="#050505"/><rect x="0.5" y="4.8" width="9.5" height="4.6" fill="#a9a9a9"/><rect x="1.5" y="5.4" width="6.5" height="2.4" fill="#d2d2d2"/><rect x="3.5" y="9.2" width="6" height="1.9" fill="#111"/><rect x="9.3" y="6.8" width="1.6" height="5.2" fill="#151515"/><rect x="1" y="11" width="8.3" height="1.8" fill="#c6c6c6"/><rect x="0.8" y="8.6" width="1" height="1" fill="#333"/></svg>
<div class="t" style="left:27.50px;top:383.92px;font-size:10px;color:#000;transform:scaleX(0.8200);">com_closet_01_cullian</div>
<div class="t" style="left:152.22px;top:383.52px;font-size:10px;color:#000;transform:scaleX(0.8200);">1</div>
<div class="t" style="left:177.00px;top:383.52px;font-size:10px;color:#000;transform:scaleX(0.8700);">Шкаф</div>
<div class="t" style="left:333.00px;top:383.52px;font-size:10px;color:#000;transform:scaleX(0.8200);">300.00</div>
<div class="t" style="left:376.24px;top:383.52px;font-size:10px;color:#000;transform:scaleX(0.8200);">no</div>
<div class="t" style="left:411.64px;top:383.52px;font-size:10px;color:#000;transform:scaleX(0.8200);">no</div>
<svg style="left:14px;top:394.00px" width="12" height="13" viewBox="0 0 12 13"><path d="M0.5 2.6 L4.5 0.2 H11.5 V2.6Z" fill="#c4c4c4"/><path d="M0.5 2.6 L4.5 0.2" stroke="#222" stroke-width="1"/><rect x="0" y="2.6" width="11" height="2.2" fill="#050505"/><rect x="0.5" y="4.8" width="9.5" height="4.6" fill="#a9a9a9"/><rect x="1.5" y="5.4" width="6.5" height="2.4" fill="#d2d2d2"/><rect x="3.5" y="9.2" width="6" height="1.9" fill="#111"/><rect x="9.3" y="6.8" width="1.6" height="5.2" fill="#151515"/><rect x="1" y="11" width="8.3" height="1.8" fill="#c6c6c6"/><rect x="0.8" y="8.6" width="1" height="1" fill="#333"/></svg>
<div class="t" style="left:27.50px;top:397.23px;font-size:10px;color:#000;transform:scaleX(0.8200);">com_closet_01_empty</div>
<div class="t" style="left:152.22px;top:396.83px;font-size:10px;color:#000;transform:scaleX(0.8200);">3</div>
<div class="t" style="left:177.00px;top:396.83px;font-size:10px;color:#000;transform:scaleX(0.8700);">Шкаф</div>
<div class="t" style="left:333.00px;top:396.83px;font-size:10px;color:#000;transform:scaleX(0.8200);">300.00</div>
<div class="t" style="left:376.24px;top:396.83px;font-size:10px;color:#000;transform:scaleX(0.8200);">no</div>
<div class="t" style="left:411.64px;top:396.83px;font-size:10px;color:#000;transform:scaleX(0.8200);">no</div>
<svg style="left:14px;top:407.32px" width="12" height="13" viewBox="0 0 12 13"><path d="M0.5 2.6 L4.5 0.2 H11.5 V2.6Z" fill="#c4c4c4"/><path d="M0.5 2.6 L4.5 0.2" stroke="#222" stroke-width="1"/><rect x="0" y="2.6" width="11" height="2.2" fill="#050505"/><rect x="0.5" y="4.8" width="9.5" height="4.6" fill="#a9a9a9"/><rect x="1.5" y="5.4" width="6.5" height="2.4" fill="#d2d2d2"/><rect x="3.5" y="9.2" width="6" height="1.9" fill="#111"/><rect x="9.3" y="6.8" width="1.6" height="5.2" fill="#151515"/><rect x="1" y="11" width="8.3" height="1.8" fill="#c6c6c6"/><rect x="0.8" y="8.6" width="1" height="1" fill="#333"/></svg>
<div class="t" style="left:27.50px;top:410.56px;font-size:10px;color:#000;transform:scaleX(0.8200);">com_closet_01_expclothe</div>
<div class="t" style="left:152.22px;top:410.16px;font-size:10px;color:#000;transform:scaleX(0.8200);">3</div>
<div class="t" style="left:177.00px;top:410.16px;font-size:10px;color:#000;transform:scaleX(0.8700);">Шкаф</div>
<div class="t" style="left:333.00px;top:410.16px;font-size:10px;color:#000;transform:scaleX(0.8200);">300.00</div>
<div class="t" style="left:376.24px;top:410.16px;font-size:10px;color:#000;transform:scaleX(0.8200);">no</div>
<div class="t" style="left:411.64px;top:410.16px;font-size:10px;color:#000;transform:scaleX(0.8200);">no</div>
<div class="t" style="left:438.00px;top:410.16px;font-size:10px;color:#000;transform:scaleX(0.8200);">expensive_skirt_03, expensive_robe_</div>
<svg style="left:14px;top:420.64px" width="12" height="13" viewBox="0 0 12 13"><path d="M0.5 2.6 L4.5 0.2 H11.5 V2.6Z" fill="#c4c4c4"/><path d="M0.5 2.6 L4.5 0.2" stroke="#222" stroke-width="1"/><rect x="0" y="2.6" width="11" height="2.2" fill="#050505"/><rect x="0.5" y="4.8" width="9.5" height="4.6" fill="#a9a9a9"/><rect x="1.5" y="5.4" width="6.5" height="2.4" fill="#d2d2d2"/><rect x="3.5" y="9.2" width="6" height="1.9" fill="#111"/><rect x="9.3" y="6.8" width="1.6" height="5.2" fill="#151515"/><rect x="1" y="11" width="8.3" height="1.8" fill="#c6c6c6"/><rect x="0.8" y="8.6" width="1" height="1" fill="#333"/></svg>
<div class="t" style="left:27.50px;top:423.88px;font-size:10px;color:#000;transform:scaleX(0.8200);">com_closet_01_fg</div>
<div class="t" style="left:152.22px;top:423.48px;font-size:10px;color:#000;transform:scaleX(0.8200);">1</div>
<div class="t" style="left:177.00px;top:423.48px;font-size:10px;color:#000;transform:scaleX(0.8700);">Шкаф</div>
<div class="t" style="left:333.00px;top:423.48px;font-size:10px;color:#000;transform:scaleX(0.8200);">300.00</div>
<div class="t" style="left:376.24px;top:423.48px;font-size:10px;color:#000;transform:scaleX(0.8200);">no</div>
<div class="t" style="left:411.64px;top:423.48px;font-size:10px;color:#000;transform:scaleX(0.8200);">no</div>
<div class="t" style="left:438.00px;top:423.48px;font-size:10px;color:#000;transform:scaleX(0.8200);">steel longbow, steel spear, steel halbe</div>
<svg style="left:14px;top:433.96px" width="12" height="13" viewBox="0 0 12 13"><path d="M0.5 2.6 L4.5 0.2 H11.5 V2.6Z" fill="#c4c4c4"/><path d="M0.5 2.6 L4.5 0.2" stroke="#222" stroke-width="1"/><rect x="0" y="2.6" width="11" height="2.2" fill="#050505"/><rect x="0.5" y="4.8" width="9.5" height="4.6" fill="#a9a9a9"/><rect x="1.5" y="5.4" width="6.5" height="2.4" fill="#d2d2d2"/><rect x="3.5" y="9.2" width="6" height="1.9" fill="#111"/><rect x="9.3" y="6.8" width="1.6" height="5.2" fill="#151515"/><rect x="1" y="11" width="8.3" height="1.8" fill="#c6c6c6"/><rect x="0.8" y="8.6" width="1" height="1" fill="#333"/></svg>
<div class="t" style="left:27.50px;top:437.19px;font-size:10px;color:#000;transform:scaleX(0.8200);">com_closet_01_g1</div>
<div class="t" style="left:152.22px;top:436.80px;font-size:10px;color:#000;transform:scaleX(0.8200);">5</div>
<div class="t" style="left:177.00px;top:436.80px;font-size:10px;color:#000;transform:scaleX(0.8700);">Шкаф</div>
<div class="t" style="left:333.00px;top:436.80px;font-size:10px;color:#000;transform:scaleX(0.8200);">300.00</div>
<div class="t" style="left:376.24px;top:436.80px;font-size:10px;color:#000;transform:scaleX(0.8200);">no</div>
<div class="t" style="left:411.64px;top:436.80px;font-size:10px;color:#000;transform:scaleX(0.8200);">no</div>
<div class="t" style="left:438.00px;top:436.80px;font-size:10px;color:#000;transform:scaleX(0.8200);">common_amulet_02, common_amule</div>
<svg style="left:14px;top:447.28px" width="12" height="13" viewBox="0 0 12 13"><path d="M0.5 2.6 L4.5 0.2 H11.5 V2.6Z" fill="#c4c4c4"/><path d="M0.5 2.6 L4.5 0.2" stroke="#222" stroke-width="1"/><rect x="0" y="2.6" width="11" height="2.2" fill="#050505"/><rect x="0.5" y="4.8" width="9.5" height="4.6" fill="#a9a9a9"/><rect x="1.5" y="5.4" width="6.5" height="2.4" fill="#d2d2d2"/><rect x="3.5" y="9.2" width="6" height="1.9" fill="#111"/><rect x="9.3" y="6.8" width="1.6" height="5.2" fill="#151515"/><rect x="1" y="11" width="8.3" height="1.8" fill="#c6c6c6"/><rect x="0.8" y="8.6" width="1" height="1" fill="#333"/></svg>
<div class="t" style="left:27.50px;top:450.51px;font-size:10px;color:#000;transform:scaleX(0.8200);">com_closet_01_jeanne</div>
<div class="t" style="left:152.22px;top:450.12px;font-size:10px;color:#000;transform:scaleX(0.8200);">1</div>
<div class="t" style="left:177.00px;top:450.12px;font-size:10px;color:#000;transform:scaleX(0.8700);">Шкаф</div>
<div class="t" style="left:333.00px;top:450.12px;font-size:10px;color:#000;transform:scaleX(0.8200);">300.00</div>
<div class="t" style="left:376.24px;top:450.12px;font-size:10px;color:#000;transform:scaleX(0.8200);">no</div>
<div class="t" style="left:411.64px;top:450.12px;font-size:10px;color:#000;transform:scaleX(0.8200);">no</div>
<div class="t" style="left:438.00px;top:450.12px;font-size:10px;color:#000;transform:scaleX(0.8200);">imperial shield, bonemold_shield, bon</div>
<svg style="left:14px;top:460.60px" width="12" height="13" viewBox="0 0 12 13"><path d="M0.5 2.6 L4.5 0.2 H11.5 V2.6Z" fill="#c4c4c4"/><path d="M0.5 2.6 L4.5 0.2" stroke="#222" stroke-width="1"/><rect x="0" y="2.6" width="11" height="2.2" fill="#050505"/><rect x="0.5" y="4.8" width="9.5" height="4.6" fill="#a9a9a9"/><rect x="1.5" y="5.4" width="6.5" height="2.4" fill="#d2d2d2"/><rect x="3.5" y="9.2" width="6" height="1.9" fill="#111"/><rect x="9.3" y="6.8" width="1.6" height="5.2" fill="#151515"/><rect x="1" y="11" width="8.3" height="1.8" fill="#c6c6c6"/><rect x="0.8" y="8.6" width="1" height="1" fill="#333"/></svg>
<div class="t" style="left:27.50px;top:463.83px;font-size:10px;color:#000;transform:scaleX(0.8200);">com_closet_01_mclothes</div>
<div class="t" style="left:149.94px;top:463.44px;font-size:10px;color:#000;transform:scaleX(0.8200);">13</div>
<div class="t" style="left:177.00px;top:463.44px;font-size:10px;color:#000;transform:scaleX(0.8700);">Шкаф</div>
<div class="t" style="left:333.00px;top:463.44px;font-size:10px;color:#000;transform:scaleX(0.8200);">300.00</div>
<div class="t" style="left:376.24px;top:463.44px;font-size:10px;color:#000;transform:scaleX(0.8200);">no</div>
<div class="t" style="left:411.64px;top:463.44px;font-size:10px;color:#000;transform:scaleX(0.8200);">no</div>
<div class="t" style="left:438.00px;top:463.44px;font-size:10px;color:#000;transform:scaleX(0.8200);">random_common_de_mclothes_01, r</div>
<svg style="left:14px;top:473.92px" width="12" height="13" viewBox="0 0 12 13"><path d="M0.5 2.6 L4.5 0.2 H11.5 V2.6Z" fill="#c4c4c4"/><path d="M0.5 2.6 L4.5 0.2" stroke="#222" stroke-width="1"/><rect x="0" y="2.6" width="11" height="2.2" fill="#050505"/><rect x="0.5" y="4.8" width="9.5" height="4.6" fill="#a9a9a9"/><rect x="1.5" y="5.4" width="6.5" height="2.4" fill="#d2d2d2"/><rect x="3.5" y="9.2" width="6" height="1.9" fill="#111"/><rect x="9.3" y="6.8" width="1.6" height="5.2" fill="#151515"/><rect x="1" y="11" width="8.3" height="1.8" fill="#c6c6c6"/><rect x="0.8" y="8.6" width="1" height="1" fill="#333"/></svg>
<div class="t" style="left:27.50px;top:477.15px;font-size:10px;color:#000;transform:scaleX(0.8200);">com_closet_01_mirel</div>
<div class="t" style="left:152.22px;top:476.75px;font-size:10px;color:#000;transform:scaleX(0.8200);">1</div>
<div class="t" style="left:177.00px;top:476.75px;font-size:10px;color:#000;transform:scaleX(0.8700);">Шкаф</div>
<div class="t" style="left:333.00px;top:476.75px;font-size:10px;color:#000;transform:scaleX(0.8200);">300.00</div>
<div class="t" style="left:376.24px;top:476.75px;font-size:10px;color:#000;transform:scaleX(0.8200);">no</div>
<div class="t" style="left:411.64px;top:476.75px;font-size:10px;color:#000;transform:scaleX(0.8200);">no</div>
<div class="t" style="left:438.00px;top:476.75px;font-size:10px;color:#000;transform:scaleX(0.8200);">l_m_enchantitem_temple_rank4, l_m_</div>
<svg style="left:14px;top:487.24px" width="12" height="13" viewBox="0 0 12 13"><path d="M0.5 2.6 L4.5 0.2 H11.5 V2.6Z" fill="#c4c4c4"/><path d="M0.5 2.6 L4.5 0.2" stroke="#222" stroke-width="1"/><rect x="0" y="2.6" width="11" height="2.2" fill="#050505"/><rect x="0.5" y="4.8" width="9.5" height="4.6" fill="#a9a9a9"/><rect x="1.5" y="5.4" width="6.5" height="2.4" fill="#d2d2d2"/><rect x="3.5" y="9.2" width="6" height="1.9" fill="#111"/><rect x="9.3" y="6.8" width="1.6" height="5.2" fill="#151515"/><rect x="1" y="11" width="8.3" height="1.8" fill="#c6c6c6"/><rect x="0.8" y="8.6" width="1" height="1" fill="#333"/></svg>
<div class="t" style="left:27.50px;top:490.47px;font-size:10px;color:#000;transform:scaleX(0.8200);">com_closet_01_mornardl</div>
<div class="t" style="left:152.22px;top:490.07px;font-size:10px;color:#000;transform:scaleX(0.8200);">1</div>
<div class="t" style="left:177.00px;top:490.07px;font-size:10px;color:#000;transform:scaleX(0.8700);">Шкаф</div>
<div class="t" style="left:333.00px;top:490.07px;font-size:10px;color:#000;transform:scaleX(0.8200);">300.00</div>
<div class="t" style="left:376.24px;top:490.07px;font-size:10px;color:#000;transform:scaleX(0.8200);">no</div>
<div class="t" style="left:411.64px;top:490.07px;font-size:10px;color:#000;transform:scaleX(0.8200);">no</div>
<div class="t" style="left:438.00px;top:490.07px;font-size:10px;color:#000;transform:scaleX(0.8200);">l_m_enchantitem_hlaalu_rank0, l_m_</div>
<svg style="left:14px;top:500.56px" width="12" height="13" viewBox="0 0 12 13"><path d="M0.5 2.6 L4.5 0.2 H11.5 V2.6Z" fill="#c4c4c4"/><path d="M0.5 2.6 L4.5 0.2" stroke="#222" stroke-width="1"/><rect x="0" y="2.6" width="11" height="2.2" fill="#050505"/><rect x="0.5" y="4.8" width="9.5" height="4.6" fill="#a9a9a9"/><rect x="1.5" y="5.4" width="6.5" height="2.4" fill="#d2d2d2"/><rect x="3.5" y="9.2" width="6" height="1.9" fill="#111"/><rect x="9.3" y="6.8" width="1.6" height="5.2" fill="#151515"/><rect x="1" y="11" width="8.3" height="1.8" fill="#c6c6c6"/><rect x="0.8" y="8.6" width="1" height="1" fill="#333"/></svg>
<div class="t" style="left:27.50px;top:503.80px;font-size:10px;color:#000;transform:scaleX(0.8200);">com_closet_01_odralhelv</div>
<div class="t" style="left:152.22px;top:503.40px;font-size:10px;color:#000;transform:scaleX(0.8200);">1</div>
<div class="t" style="left:177.00px;top:503.40px;font-size:10px;color:#000;transform:scaleX(0.8700);">Шкаф</div>
<div class="t" style="left:333.00px;top:503.40px;font-size:10px;color:#000;transform:scaleX(0.8200);">300.00</div>
<div class="t" style="left:376.24px;top:503.40px;font-size:10px;color:#000;transform:scaleX(0.8200);">no</div>
<div class="t" style="left:411.64px;top:503.40px;font-size:10px;color:#000;transform:scaleX(0.8200);">no</div>
<div class="t" style="left:438.00px;top:503.40px;font-size:10px;color:#000;transform:scaleX(0.8200);">common_amulet_04, amulet of mighty</div>
<svg style="left:14px;top:513.88px" width="12" height="13" viewBox="0 0 12 13"><path d="M0.5 2.6 L4.5 0.2 H11.5 V2.6Z" fill="#c4c4c4"/><path d="M0.5 2.6 L4.5 0.2" stroke="#222" stroke-width="1"/><rect x="0" y="2.6" width="11" height="2.2" fill="#050505"/><rect x="0.5" y="4.8" width="9.5" height="4.6" fill="#a9a9a9"/><rect x="1.5" y="5.4" width="6.5" height="2.4" fill="#d2d2d2"/><rect x="3.5" y="9.2" width="6" height="1.9" fill="#111"/><rect x="9.3" y="6.8" width="1.6" height="5.2" fill="#151515"/><rect x="1" y="11" width="8.3" height="1.8" fill="#c6c6c6"/><rect x="0.8" y="8.6" width="1" height="1" fill="#333"/></svg>
<div class="t" style="left:27.50px;top:517.11px;font-size:10px;color:#000;transform:scaleX(0.8200);">com_cupboard_01</div>
<div class="t" style="left:152.22px;top:516.71px;font-size:10px;color:#000;transform:scaleX(0.8200);">0</div>
<div class="t" style="left:177.00px;top:516.71px;font-size:10px;color:#000;transform:scaleX(0.8700);">Буфет</div>
<div class="t" style="left:333.00px;top:516.71px;font-size:10px;color:#000;transform:scaleX(0.8200);">100.00</div>
<div class="t" style="left:376.24px;top:516.71px;font-size:10px;color:#000;transform:scaleX(0.8200);">no</div>
<div class="t" style="left:411.64px;top:516.71px;font-size:10px;color:#000;transform:scaleX(0.8200);">no</div>
<div class="t" style="left:438.00px;top:516.71px;font-size:10px;color:#000;transform:scaleX(0.8200);">-NONE-</div>
<svg style="left:14px;top:527.20px" width="12" height="13" viewBox="0 0 12 13"><path d="M0.5 2.6 L4.5 0.2 H11.5 V2.6Z" fill="#c4c4c4"/><path d="M0.5 2.6 L4.5 0.2" stroke="#222" stroke-width="1"/><rect x="0" y="2.6" width="11" height="2.2" fill="#050505"/><rect x="0.5" y="4.8" width="9.5" height="4.6" fill="#a9a9a9"/><rect x="1.5" y="5.4" width="6.5" height="2.4" fill="#d2d2d2"/><rect x="3.5" y="9.2" width="6" height="1.9" fill="#111"/><rect x="9.3" y="6.8" width="1.6" height="5.2" fill="#151515"/><rect x="1" y="11" width="8.3" height="1.8" fill="#c6c6c6"/><rect x="0.8" y="8.6" width="1" height="1" fill="#333"/></svg>
<div class="t" style="left:27.50px;top:530.43px;font-size:10px;color:#000;transform:scaleX(0.8200);">com_cupboard_01_booze</div>
<div class="t" style="left:152.22px;top:530.03px;font-size:10px;color:#000;transform:scaleX(0.8200);">9</div>
<div class="t" style="left:177.00px;top:530.03px;font-size:10px;color:#000;transform:scaleX(0.8700);">Буфет</div>
<div class="t" style="left:333.00px;top:530.03px;font-size:10px;color:#000;transform:scaleX(0.8200);">100.00</div>
<div class="t" style="left:376.24px;top:530.03px;font-size:10px;color:#000;transform:scaleX(0.8200);">no</div>
<div class="t" style="left:411.64px;top:530.03px;font-size:10px;color:#000;transform:scaleX(0.8200);">no</div>
<div class="t" style="left:438.00px;top:530.03px;font-size:10px;color:#000;transform:scaleX(0.8200);">potion_comberry_wine_01, Potion_Cy</div>
<svg style="left:14px;top:540.52px" width="12" height="13" viewBox="0 0 12 13"><path d="M0.5 2.6 L4.5 0.2 H11.5 V2.6Z" fill="#c4c4c4"/><path d="M0.5 2.6 L4.5 0.2" stroke="#222" stroke-width="1"/><rect x="0" y="2.6" width="11" height="2.2" fill="#050505"/><rect x="0.5" y="4.8" width="9.5" height="4.6" fill="#a9a9a9"/><rect x="1.5" y="5.4" width="6.5" height="2.4" fill="#d2d2d2"/><rect x="3.5" y="9.2" width="6" height="1.9" fill="#111"/><rect x="9.3" y="6.8" width="1.6" height="5.2" fill="#151515"/><rect x="1" y="11" width="8.3" height="1.8" fill="#c6c6c6"/><rect x="0.8" y="8.6" width="1" height="1" fill="#333"/></svg>
<div class="t" style="left:27.50px;top:543.75px;font-size:10px;color:#000;transform:scaleX(0.8200);">com_cupboard_01_gavin</div>
<div class="t" style="left:149.94px;top:543.36px;font-size:10px;color:#000;transform:scaleX(0.8200);">10</div>
<div class="t" style="left:177.00px;top:543.36px;font-size:10px;color:#000;transform:scaleX(0.8700);">Буфет</div>
<div class="t" style="left:333.00px;top:543.36px;font-size:10px;color:#000;transform:scaleX(0.8200);">100.00</div>
<div class="t" style="left:376.24px;top:543.36px;font-size:10px;color:#000;transform:scaleX(0.8200);">no</div>
<div class="t" style="left:411.64px;top:543.36px;font-size:10px;color:#000;transform:scaleX(0.8200);">no</div>
<div class="t" style="left:438.00px;top:543.36px;font-size:10px;color:#000;transform:scaleX(0.8200);">misc_com_bottle_03, misc_com_bottl</div>
<svg style="left:14px;top:553.84px" width="12" height="13" viewBox="0 0 12 13"><path d="M0.5 2.6 L4.5 0.2 H11.5 V2.6Z" fill="#c4c4c4"/><path d="M0.5 2.6 L4.5 0.2" stroke="#222" stroke-width="1"/><rect x="0" y="2.6" width="11" height="2.2" fill="#050505"/><rect x="0.5" y="4.8" width="9.5" height="4.6" fill="#a9a9a9"/><rect x="1.5" y="5.4" width="6.5" height="2.4" fill="#d2d2d2"/><rect x="3.5" y="9.2" width="6" height="1.9" fill="#111"/><rect x="9.3" y="6.8" width="1.6" height="5.2" fill="#151515"/><rect x="1" y="11" width="8.3" height="1.8" fill="#c6c6c6"/><rect x="0.8" y="8.6" width="1" height="1" fill="#333"/></svg>
<div class="t" style="left:27.50px;top:557.07px;font-size:10px;color:#000;transform:scaleX(0.8200);">com_cupboard_01_glasses</div>
<div class="t" style="left:152.22px;top:556.67px;font-size:10px;color:#000;transform:scaleX(0.8200);">4</div>
<div class="t" style="left:177.00px;top:556.67px;font-size:10px;color:#000;transform:scaleX(0.8700);">Буфет</div>
<div class="t" style="left:333.00px;top:556.67px;font-size:10px;color:#000;transform:scaleX(0.8200);">100.00</div>
<div class="t" style="left:376.24px;top:556.67px;font-size:10px;color:#000;transform:scaleX(0.8200);">no</div>
<div class="t" style="left:411.64px;top:556.67px;font-size:10px;color:#000;transform:scaleX(0.8200);">no</div>
<div class="t" style="left:438.00px;top:556.67px;font-size:10px;color:#000;transform:scaleX(0.8200);">Misc_DE_glass_green_01</div>
<svg style="left:14px;top:567.16px" width="12" height="13" viewBox="0 0 12 13"><path d="M0.5 2.6 L4.5 0.2 H11.5 V2.6Z" fill="#c4c4c4"/><path d="M0.5 2.6 L4.5 0.2" stroke="#222" stroke-width="1"/><rect x="0" y="2.6" width="11" height="2.2" fill="#050505"/><rect x="0.5" y="4.8" width="9.5" height="4.6" fill="#a9a9a9"/><rect x="1.5" y="5.4" width="6.5" height="2.4" fill="#d2d2d2"/><rect x="3.5" y="9.2" width="6" height="1.9" fill="#111"/><rect x="9.3" y="6.8" width="1.6" height="5.2" fill="#151515"/><rect x="1" y="11" width="8.3" height="1.8" fill="#c6c6c6"/><rect x="0.8" y="8.6" width="1" height="1" fill="#333"/></svg>
<div class="t" style="left:27.50px;top:570.39px;font-size:10px;color:#000;transform:scaleX(0.8200);">com_cupboard_01_goblets</div>
<div class="t" style="left:152.22px;top:569.99px;font-size:10px;color:#000;transform:scaleX(0.8200);">1</div>
<div class="t" style="left:177.00px;top:569.99px;font-size:10px;color:#000;transform:scaleX(0.8700);">Буфет</div>
<div class="t" style="left:333.00px;top:569.99px;font-size:10px;color:#000;transform:scaleX(0.8200);">100.00</div>
<div class="t" style="left:376.24px;top:569.99px;font-size:10px;color:#000;transform:scaleX(0.8200);">no</div>
<div class="t" style="left:411.64px;top:569.99px;font-size:10px;color:#000;transform:scaleX(0.8200);">no</div>
<div class="t" style="left:438.00px;top:569.99px;font-size:10px;color:#000;transform:scaleX(0.8200);">misc_com_metal_goblet_02</div>
<svg style="left:14px;top:580.48px" width="12" height="13" viewBox="0 0 12 13"><path d="M0.5 2.6 L4.5 0.2 H11.5 V2.6Z" fill="#c4c4c4"/><path d="M0.5 2.6 L4.5 0.2" stroke="#222" stroke-width="1"/><rect x="0" y="2.6" width="11" height="2.2" fill="#050505"/><rect x="0.5" y="4.8" width="9.5" height="4.6" fill="#a9a9a9"/><rect x="1.5" y="5.4" width="6.5" height="2.4" fill="#d2d2d2"/><rect x="3.5" y="9.2" width="6" height="1.9" fill="#111"/><rect x="9.3" y="6.8" width="1.6" height="5.2" fill="#151515"/><rect x="1" y="11" width="8.3" height="1.8" fill="#c6c6c6"/><rect x="0.8" y="8.6" width="1" height="1" fill="#333"/></svg>
<div class="t" style="left:27.50px;top:583.71px;font-size:10px;color:#000;transform:scaleX(0.8200);">com_cupboard_01_pos</div>
<div class="t" style="left:149.94px;top:583.31px;font-size:10px;color:#000;transform:scaleX(0.8200);">14</div>
<div class="t" style="left:177.00px;top:583.31px;font-size:10px;color:#000;transform:scaleX(0.8700);">Буфет</div>
<div class="t" style="left:333.00px;top:583.31px;font-size:10px;color:#000;transform:scaleX(0.8200);">100.00</div>
<div class="t" style="left:376.24px;top:583.31px;font-size:10px;color:#000;transform:scaleX(0.8200);">no</div>
<div class="t" style="left:411.64px;top:583.31px;font-size:10px;color:#000;transform:scaleX(0.8200);">no</div>
<div class="t" style="left:438.00px;top:583.31px;font-size:10px;color:#000;transform:scaleX(0.8200);">random_pos, random_loot_special</div>
<svg style="left:14px;top:593.80px" width="12" height="13" viewBox="0 0 12 13"><path d="M0.5 2.6 L4.5 0.2 H11.5 V2.6Z" fill="#c4c4c4"/><path d="M0.5 2.6 L4.5 0.2" stroke="#222" stroke-width="1"/><rect x="0" y="2.6" width="11" height="2.2" fill="#050505"/><rect x="0.5" y="4.8" width="9.5" height="4.6" fill="#a9a9a9"/><rect x="1.5" y="5.4" width="6.5" height="2.4" fill="#d2d2d2"/><rect x="3.5" y="9.2" width="6" height="1.9" fill="#111"/><rect x="9.3" y="6.8" width="1.6" height="5.2" fill="#151515"/><rect x="1" y="11" width="8.3" height="1.8" fill="#c6c6c6"/><rect x="0.8" y="8.6" width="1" height="1" fill="#333"/></svg>
<div class="t" style="left:27.50px;top:597.03px;font-size:10px;color:#000;transform:scaleX(0.8200);">com_cupboard_01_tankard</div>
<div class="t" style="left:152.22px;top:596.63px;font-size:10px;color:#000;transform:scaleX(0.8200);">5</div>
<div class="t" style="left:177.00px;top:596.63px;font-size:10px;color:#000;transform:scaleX(0.8700);">Буфет</div>
<div class="t" style="left:333.00px;top:596.63px;font-size:10px;color:#000;transform:scaleX(0.8200);">100.00</div>
<div class="t" style="left:376.24px;top:596.63px;font-size:10px;color:#000;transform:scaleX(0.8200);">no</div>
<div class="t" style="left:411.64px;top:596.63px;font-size:10px;color:#000;transform:scaleX(0.8200);">no</div>
<div class="t" style="left:438.00px;top:596.63px;font-size:10px;color:#000;transform:scaleX(0.8200);">misc_com_tankard_01</div>
</div></div>
<div style="left:576px;top:113px;width:14px;height:490px;background:#f0f0f0"></div>
<svg style="left:578px;top:116px" width="10" height="8" viewBox="0 0 10 8"><path d="M1.5 6 L5 2.5 L8.5 6" fill="none" stroke="#606060" stroke-width="1.3"/></svg>
<svg style="left:578px;top:591px" width="10" height="8" viewBox="0 0 10 8"><path d="M1.5 2 L5 5.5 L8.5 2" fill="none" stroke="#606060" stroke-width="1.3"/></svg>
<div style="left:12px;top:603px;width:564px;height:12px;background:#f0f0f0"></div>
<div style="left:25px;top:603.5px;width:375px;height:11px;background:#cdcdcd"></div>
<svg style="left:14px;top:605px" width="8" height="9" viewBox="0 0 8 9"><path d="M5.5 1 L2 4.5 L5.5 8" fill="none" stroke="#606060" stroke-width="1.3"/></svg>
<svg style="left:566px;top:605px" width="8" height="9" viewBox="0 0 8 9"><path d="M2.5 1 L6 4.5 L2.5 8" fill="none" stroke="#606060" stroke-width="1.3"/></svg>
<div style="left:576px;top:603px;width:14px;height:12px;background:#f0f0f0"></div>
<svg style="left:594px;top:81px" width="599" height="298" viewBox="594 81 599 298">
<defs>
<linearGradient id="g3" x1="0" y1="0" x2="0" y2="1"><stop offset="0" stop-color="#2a2219"/><stop offset="0.35" stop-color="#30281e"/><stop offset="0.6" stop-color="#2b261b"/><stop offset="1" stop-color="#29261a"/></linearGradient>
<clipPath id="cp3"><polygon points="594,211 729,135 1193,157 1193,379 594,379"/></clipPath>
<filter id="tx" x="0" y="0" width="100%" height="100%"><feTurbulence type="fractalNoise" baseFrequency="0.06 0.3" numOctaves="2" seed="5"/><feColorMatrix values="0 0 0 0 0  0 0 0 0 0  0 0 0 0 0  0 0 0 -1.4 1.0"/></filter>
<filter id="bl"><feGaussianBlur stdDeviation="0.6"/></filter>
</defs>
<g clip-path="url(#cp3)">
<rect x="594" y="130" width="600" height="250" fill="url(#g3)"/>
<ellipse cx="750" cy="188" rx="45" ry="20" fill="#4e4434" opacity=".7"/><ellipse cx="850" cy="200" rx="40" ry="12" fill="#4a3f30" opacity=".6"/><ellipse cx="960" cy="205" rx="35" ry="12" fill="#3e3428" opacity=".6"/>
<ellipse cx="1080" cy="205" rx="50" ry="14" fill="#3e3528" opacity=".6"/>
<path d="M729 139 L1193 161" stroke="#1a140e" stroke-width="9"/>
<path d="M594 223 L729 146" stroke="#3a281a" stroke-width="22"/>
<path d="M594 214.0 L594 236.0" stroke="#2c1d12" stroke-width="1"/><path d="M600 210.55 L600 232.55" stroke="#2c1d12" stroke-width="1"/><path d="M606 207.1 L606 229.1" stroke="#2c1d12" stroke-width="1"/><path d="M612 203.65 L612 225.65" stroke="#2c1d12" stroke-width="1"/><path d="M618 200.2 L618 222.2" stroke="#2c1d12" stroke-width="1"/><path d="M624 196.75 L624 218.75" stroke="#2c1d12" stroke-width="1"/><path d="M630 193.3 L630 215.3" stroke="#2c1d12" stroke-width="1"/><path d="M636 189.85 L636 211.85" stroke="#2c1d12" stroke-width="1"/><path d="M642 186.4 L642 208.4" stroke="#2c1d12" stroke-width="1"/><path d="M648 182.95 L648 204.95" stroke="#2c1d12" stroke-width="1"/><path d="M654 179.5 L654 201.5" stroke="#2c1d12" stroke-width="1"/><path d="M660 176.05 L660 198.05" stroke="#2c1d12" stroke-width="1"/><path d="M666 172.6 L666 194.6" stroke="#2c1d12" stroke-width="1"/><path d="M672 169.15 L672 191.15" stroke="#2c1d12" stroke-width="1"/><path d="M678 165.7 L678 187.7" stroke="#2c1d12" stroke-width="1"/><path d="M684 162.25 L684 184.25" stroke="#2c1d12" stroke-width="1"/><path d="M690 158.8 L690 180.8" stroke="#2c1d12" stroke-width="1"/><path d="M696 155.35 L696 177.35" stroke="#2c1d12" stroke-width="1"/><path d="M702 151.9 L702 173.9" stroke="#2c1d12" stroke-width="1"/><path d="M708 148.45 L708 170.45" stroke="#2c1d12" stroke-width="1"/><path d="M714 145.0 L714 167.0" stroke="#2c1d12" stroke-width="1"/><path d="M720 141.55 L720 163.55" stroke="#2c1d12" stroke-width="1"/><path d="M726 138.1 L726 160.1" stroke="#2c1d12" stroke-width="1"/>
<path d="M594 238 L712 171" stroke="#50341f" stroke-width="3"/>
<g fill="none" filter="url(#bl)"><path d="M809 149 L1193 165" stroke="#3e342a" stroke-width="4"/><path d="M820 156 L1193 172" stroke="#453a2e" stroke-width="3"/><path d="M642 218 L815 142" stroke="#4a3c2e" stroke-width="5"/><path d="M700 197 L887 175" stroke="#4e4235" stroke-width="6"/><path d="M743 202 L914 177 L1005 180" stroke="#4a3e31" stroke-width="6"/><path d="M647 218 L860 218" stroke="#443a2e" stroke-width="5"/><path d="M754 210 L914 205 L1193 190" stroke="#473c30" stroke-width="6"/><path d="M880 167 L1193 167" stroke="#3e3428" stroke-width="3"/><path d="M880 209 L1005 180" stroke="#4a3f32" stroke-width="6"/><path d="M1000 223 L1192 172" stroke="#4a3f32" stroke-width="6"/><path d="M600 262 L760 248 L900 240" stroke="#3a3126" stroke-width="6"/><path d="M860 232 L1060 226" stroke="#362e24" stroke-width="5"/><path d="M698 174 L778 226 L829 288" stroke="#1d1a16" stroke-width="10"/><path d="M698 171.6 L778 223.6 L829 285.6" stroke="#37322b" stroke-width="2.4"/><path d="M746 145 L861 205 L914 218 L1003 220" stroke="#211d18" stroke-width="8"/><path d="M746 143.2 L861 203.2 L914 216.2 L1003 218.2" stroke="#35302a" stroke-width="1.8"/><path d="M880 169 L1003 220" stroke="#221e19" stroke-width="6"/><path d="M880 167.2 L1003 218.2" stroke="#35302a" stroke-width="1.8"/><path d="M1008 180 L1192 212" stroke="#221e19" stroke-width="6"/><path d="M1008 178.2 L1192 210.2" stroke="#35302a" stroke-width="1.8"/><path d="M1008 161 L1008 220" stroke="#2a241c" stroke-width="6"/><path d="M1125 165 L1125 225" stroke="#2a241c" stroke-width="5"/><path d="M760 176 L760 230" stroke="#2e261c" stroke-width="5"/><path d="M620 245 L680 262 L740 250" stroke="#1e1a14" stroke-width="6"/><path d="M1160 230 L1185 379" stroke="#181410" stroke-width="7"/><path d="M900 300 L1000 379" stroke="#1e1a14" stroke-width="6"/></g>
<rect x="594" y="130" width="600" height="250" filter="url(#tx)" opacity="0.3"/>
<g fill="#c0a868"><rect x="718" y="196" width="3" height="5"/><rect x="726" y="200" width="2.5" height="4"/><rect x="1072" y="198" width="3" height="4"/><rect x="1184" y="238" width="4" height="6"/><rect x="956" y="208" width="3" height="3"/><rect x="888" y="211" width="3" height="3"/></g>
<ellipse cx="811" cy="338" rx="3.5" ry="11" fill="#9a8458" filter="url(#bl)"/><path d="M805 363 H834" stroke="#4a4028" stroke-width="1.2"/><path d="M826 250 L834 270" stroke="#181410" stroke-width="8"/>
</g>
</svg>
<div style="left:0px;top:619px;width:1200px;height:7px;background:linear-gradient(180deg,#8a8a8a,#a4a4a4 70%,#b0b0b0)"></div>
<div style="left:0px;top:626px;width:1200px;height:18px;background:#f0f0f0"></div>
<div style="left:0px;top:628px;width:116.5px;height:15.5px;box-sizing:border-box;border-top:1px solid #b4b4b4;border-left:1px solid #b4b4b4;border-right:1px solid #fff;border-bottom:1px solid #fff"></div>
<div style="left:119px;top:628px;width:56px;height:15.5px;box-sizing:border-box;border-top:1px solid #b4b4b4;border-left:1px solid #b4b4b4;border-right:1px solid #fff;border-bottom:1px solid #fff"></div>
<div style="left:177.5px;top:628px;width:212.5px;height:15.5px;box-sizing:border-box;border-top:1px solid #b4b4b4;border-left:1px solid #b4b4b4;border-right:1px solid #fff;border-bottom:1px solid #fff"></div>
<div style="left:392px;top:628px;width:807px;height:15.5px;box-sizing:border-box;border-top:1px solid #b4b4b4;border-left:1px solid #b4b4b4;border-right:1px solid #fff;border-bottom:1px solid #fff"></div>
<div class="t" style="left:2.00px;top:631.17px;font-size:9.6px;color:#000;transform:scaleX(0.9097);">Camera</div>
<div class="t" style="left:179.00px;top:631.17px;font-size:9.6px;color:#000;transform:scaleX(0.9340);">-108, 803, 769 (Balmora, Shop Andeno Telran)</div>
<div class="t" style="left:394.20px;top:631.17px;font-size:9.6px;color:#000;transform:scaleX(0.9088);">Objects: 142, Faces: 27614, Lights: 13, NPCs: 1, Creatures: 0; [Sel Obj: 0, Fac: 0, Lite: 0]</div>
<div style="left:0px;top:644px;width:1200px;height:31px;background:linear-gradient(90deg,#1e1f21 0%,#222326 40%,#1f2225 58%,#232b31 66%,#222a2f 72%,#1f1f20 82%,#1c1c1c 100%)"></div>
<div style="left:0px;top:644px;width:37px;height:31px;background:#131313"></div>
<svg style="left:12px;top:653px" width="14" height="14" viewBox="0 0 14 14"><path d="M0 2 L6 1.2 V6.5 H0Z M7 1 L14 0 V6.5 H7Z M0 7.5 H6 V12.8 L0 12Z M7 7.5 H14 V14 L7 13Z" fill="#fff"/></svg>
<div style="left:37px;top:644px;width:269px;height:31px;background:#f2f2f2"></div>
<svg style="left:46px;top:652px" width="14" height="14" viewBox="0 0 14 14"><circle cx="8.5" cy="5.5" r="4.3" fill="none" stroke="#222" stroke-width="1.2"/><path d="M5.5 8.5 L1 13" stroke="#222" stroke-width="1.4"/></svg>
<div class="t" style="left:69.00px;top:653.92px;font-size:12.5px;color:#2a2a2a;transform:scaleX(0.9096);">Введите здесь текст для поиска</div>
<svg style="left:317px;top:651px" width="17" height="15" viewBox="0 0 17 15"><rect x="3.5" y="3.5" width="7" height="8" fill="none" stroke="#fff" stroke-width="1.1"/><path d="M1 2 H13 M1 13 H13" stroke="#fff" stroke-width="1.1"/><path d="M15 5 V12 M15 2.5 V3.5" stroke="#fff" stroke-width="1.1"/></svg>
<svg style="left:356px;top:650px" width="17" height="17" viewBox="0 0 17 17"><path d="M8.5 1 L15 3 V8 Q15 13 8.5 16 Q2 13 2 8 V3Z" fill="#fff"/><path d="M8.5 2 V15.5 M2.5 8 H14.5" stroke="#222" stroke-width="1"/></svg>
<svg style="left:395px;top:650px" width="17" height="17" viewBox="0 0 17 17"><circle cx="8.5" cy="8.5" r="5" fill="none" stroke="#fff" stroke-width="2.4" stroke-dasharray="2.2 1.7"/><circle cx="8.5" cy="8.5" r="4.2" fill="none" stroke="#fff" stroke-width="1.5"/></svg>
<svg style="left:433px;top:650px" width="19" height="16" viewBox="0 0 19 16"><path d="M1 1 H7 L8.5 3 H18 V15 H1Z" fill="#f5c542"/><path d="M1 5 H18 V15 H1Z" fill="#ffd966"/><path d="M5 9 H14 V15 H12 V11.5 H7 V15 H5Z" fill="#2b8ad8"/></svg>
<div style="left:427px;top:672px;width:32px;height:3px;background:#76b9ed"></div>
<svg style="left:472px;top:650px" width="19" height="17" viewBox="0 0 19 17"><ellipse cx="8" cy="10" rx="7.5" ry="6" fill="#cfe3f2"/><circle cx="5" cy="8" r="1.3" fill="#e04040"/><circle cx="8" cy="6" r="1.3" fill="#40a040"/><circle cx="4" cy="12" r="1.3" fill="#3070e0"/><path d="M9 14 L17 2" stroke="#c07820" stroke-width="2"/><path d="M16 1 L18 3" stroke="#e0a040" stroke-width="2"/></svg>
<svg style="left:510px;top:650px" width="19" height="18" viewBox="0 0 19 18"><path d="M9.5 1 L17 4 V9 Q17 14 9.5 17 Q2 14 2 9 V4Z" fill="#1c8ee0"/><path d="M9.5 1 L17 4 V9 L9.5 9Z" fill="#5cb4f0"/><rect x="11" y="5" width="2" height="2" fill="#fff"/><rect x="13.5" y="5" width="2" height="2" fill="#fff"/><rect x="11" y="7.5" width="2" height="2" fill="#fff"/><rect x="13.5" y="7.5" width="2" height="2" fill="#fff"/><circle cx="5.5" cy="14" r="2.6" fill="none" stroke="#9aa" stroke-width="1.8" stroke-dasharray="1.3 .9"/></svg>
<svg style="left:549px;top:650px" width="19" height="19" viewBox="0 0 19 19"><rect width="19" height="19" fill="#e0102d"/><path d="M5 4 H15 V14 L12 11 V7 H8Z M5 6 L8 9 V12 H11 L14 15 H5Z" fill="#fff"/></svg>
<svg style="left:588px;top:650px" width="18" height="18" viewBox="0 0 18 18"><ellipse cx="9" cy="9" rx="8.5" ry="8.5" fill="#e0102d"/><ellipse cx="9" cy="9" rx="3.4" ry="6.5" fill="#232528"/></svg>
<div style="left:582px;top:672px;width:32px;height:3px;background:#76b9ed"></div>
<svg style="left:627px;top:650px" width="18" height="18" viewBox="0 0 18 18"><circle cx="9" cy="9" r="8.5" fill="#db4437"/><path d="M9 9 L1.6 13.25 A8.5 8.5 0 0 1 1.6 4.75Z" fill="#0f9d58"/><path d="M9 9 L1.6 13.25 A8.5 8.5 0 0 0 16.4 13.25Z M9 9" fill="#0f9d58"/><path d="M9 9 L9 17.5 A8.5 8.5 0 0 0 16.4 4.75Z" fill="#ffcd40"/><path d="M9 9 L1.6 4.75 A8.5 8.5 0 0 0 9 17.5Z" fill="#0f9d58"/><circle cx="9" cy="9" r="4" fill="#fff"/><circle cx="9" cy="9" r="3.1" fill="#4285f4"/></svg>
<div style="left:621px;top:672px;width:32px;height:3px;background:#76b9ed"></div>
<div style="left:656px;top:644px;width:38px;height:31px;background:#3d3d3d"></div>
<div style="left:656px;top:672px;width:38px;height:3px;background:#76b9ed"></div>
<svg style="left:665px;top:651px" width="20" height="17" viewBox="0 0 20 17"><path d="M6 2 L14 10" stroke="#ddd" stroke-width="2.5"/><path d="M6.5 2.5 L13.5 9.5" stroke="#555" stroke-width=".7"/><path d="M12 8 L15 11" stroke="#e0c020" stroke-width="2"/><rect x="2" y="11" width="15" height="4" fill="#e00000"/><rect x="10" y="12" width="7" height="2.5" fill="#fff"/><path d="M1 16 H18" stroke="#000" stroke-width="1"/><rect x="2" y="9" width="2" height="2" fill="#fff"/></svg>
<svg style="left:1005px;top:653px" width="12" height="8" viewBox="0 0 12 8"><path d="M1 7 L6 2 L11 7" fill="none" stroke="#fff" stroke-width="1.1"/></svg>
<svg style="left:1024px;top:651px" width="13" height="14" viewBox="0 0 13 14"><rect x="1.5" y="3.5" width="7" height="7" fill="none" stroke="#fff" stroke-width="1"/><path d="M8.5 6 L11.5 4.5 V9.5 L8.5 8" fill="none" stroke="#fff" stroke-width="1"/><path d="M3 1.5 H7 M3 12.5 H7" stroke="#fff" stroke-width="1"/></svg>
<svg style="left:1041px;top:651px" width="14" height="14" viewBox="0 0 14 14"><path d="M1.5 5 H4 L7 2 V12 L4 9 H1.5Z" fill="none" stroke="#fff" stroke-width="1"/><path d="M9 5 Q10 7 9 9 M11 3.5 Q13 7 11 10.5" fill="none" stroke="#fff" stroke-width="1"/></svg>
<svg style="left:1060px;top:651px" width="15" height="14" viewBox="0 0 15 14"><rect x="2.5" y="2.5" width="11" height="8" fill="none" stroke="#fff" stroke-width="1"/><path d="M6 12.5 H10 M8 10.5 V12.5" stroke="#fff" stroke-width="1"/><rect x="0.5" y="0.5" width="4" height="3" fill="#232528" stroke="#fff" stroke-width=".8"/></svg>
<div class="t" style="left:1082.00px;top:652.69px;font-size:11px;color:#fff;transform:scaleX(0.7943);">РУС</div>
<div class="t" style="left:1121.00px;top:646.19px;font-size:11px;color:#fff;transform:scaleX(0.7850);">12:11</div>
<div class="t" style="left:1110.75px;top:660.69px;font-size:11px;color:#fff;transform:scaleX(0.7710);">12.06.2022</div>
<svg style="left:1167px;top:652px" width="15" height="14" viewBox="0 0 15 14"><path d="M1.5 1.5 H13.5 V10.5 H9 L7.5 12.5 L6 10.5 H1.5Z" fill="none" stroke="#fff" stroke-width="1.1"/></svg>
<div style="left:1197px;top:644px;width:1px;height:31px;background:#5a5a5a"></div>
<div style="left:615px;top:379px;width:560px;height:220px;box-sizing:border-box;background:#fff;border-left:2px solid #8c8c8c;border-bottom:1px solid #e8e8e8"></div>
<div style="left:617px;top:379px;width:547px;height:10px;background:#f0f0f0;box-sizing:border-box;border-bottom:2px solid #8c8c8c"></div>
<div style="left:810px;top:379px;width:2px;height:9px;background:#a0a0a0"></div>
<div class="t" style="left:816.00px;top:378.04px;font-size:10px;color:#000;transform:scaleX(0.8200);">Ref...</div>
<div style="left:617px;top:389px;width:546px;height:197px;overflow:hidden">
<div style="left:-617px;top:-389px;width:1200px;height:675px">
<div style="left:617px;top:399.73px;width:546px;height:1px;background:#f0f0f0"></div>
<div style="left:617px;top:410.66px;width:546px;height:1px;background:#f0f0f0"></div>
<div style="left:617px;top:421.59px;width:546px;height:1px;background:#f0f0f0"></div>
<div style="left:617px;top:432.52px;width:546px;height:1px;background:#f0f0f0"></div>
<div style="left:617px;top:443.45px;width:546px;height:1px;background:#f0f0f0"></div>
<div style="left:617px;top:454.38px;width:546px;height:1px;background:#f0f0f0"></div>
<div style="left:617px;top:465.31px;width:546px;height:1px;background:#f0f0f0"></div>
<div style="left:617px;top:476.24px;width:546px;height:1px;background:#f0f0f0"></div>
<div style="left:617px;top:487.17px;width:546px;height:1px;background:#f0f0f0"></div>
<div style="left:617px;top:498.1px;width:546px;height:1px;background:#f0f0f0"></div>
<div style="left:617px;top:509.03px;width:546px;height:1px;background:#f0f0f0"></div>
<div style="left:617px;top:519.96px;width:546px;height:1px;background:#f0f0f0"></div>
<div style="left:617px;top:530.89px;width:546px;height:1px;background:#f0f0f0"></div>
<div style="left:617px;top:541.82px;width:546px;height:1px;background:#f0f0f0"></div>
<div style="left:617px;top:552.75px;width:546px;height:1px;background:#f0f0f0"></div>
<div style="left:617px;top:563.68px;width:546px;height:1px;background:#f0f0f0"></div>
<div style="left:617px;top:574.61px;width:546px;height:1px;background:#f0f0f0"></div>
<div style="left:617px;top:585.54px;width:546px;height:1px;background:#f0f0f0"></div>
<div style="left:746.5px;top:389px;width:1px;height:200px;background:#f0f0f0"></div>
<div style="left:811px;top:389px;width:1px;height:200px;background:#f0f0f0"></div>
<div class="t" style="left:819.82px;top:390.94px;font-size:10px;color:#000;transform:scaleX(0.8200);">309</div>
<div class="t" style="left:824.38px;top:401.87px;font-size:10px;color:#000;transform:scaleX(0.8200);">59</div>
<div class="t" style="left:620.00px;top:412.80px;font-size:10px;color:#000;transform:scaleX(0.8200);">Balmora, Hlaalo Manor</div>
<div class="t" style="left:765.74px;top:412.80px;font-size:10px;color:#000;transform:scaleX(0.8200);">Interior</div>
<div class="t" style="left:819.82px;top:412.80px;font-size:10px;color:#000;transform:scaleX(0.8200);">249</div>
<div class="t" style="left:620.00px;top:423.73px;font-size:10px;color:#000;transform:scaleX(0.8200);">Balmora, Hlaalu Council Manor</div>
<div class="t" style="left:765.74px;top:423.73px;font-size:10px;color:#000;transform:scaleX(0.8200);">Interior</div>
<div class="t" style="left:819.82px;top:423.73px;font-size:10px;color:#000;transform:scaleX(0.8200);">221</div>
<div class="t" style="left:620.00px;top:434.66px;font-size:10px;color:#000;transform:scaleX(0.8200);">Balmora, Itan's House</div>
<div class="t" style="left:765.74px;top:434.66px;font-size:10px;color:#000;transform:scaleX(0.8200);">Interior</div>
<div class="t" style="left:824.38px;top:434.66px;font-size:10px;color:#000;transform:scaleX(0.8200);">97</div>
<div class="t" style="left:620.00px;top:445.59px;font-size:10px;color:#000;transform:scaleX(0.8200);">Balmora, Karlirah's House</div>
<div class="t" style="left:765.74px;top:445.59px;font-size:10px;color:#000;transform:scaleX(0.8200);">Interior</div>
<div class="t" style="left:819.82px;top:445.59px;font-size:10px;color:#000;transform:scaleX(0.8200);">146</div>
<div class="t" style="left:620.00px;top:456.52px;font-size:10px;color:#000;transform:scaleX(0.8200);">Balmora, Lucky Lockup</div>
<div class="t" style="left:765.74px;top:456.52px;font-size:10px;color:#000;transform:scaleX(0.8200);">Interior</div>
<div class="t" style="left:819.82px;top:456.52px;font-size:10px;color:#000;transform:scaleX(0.8200);">208</div>
<div class="t" style="left:620.00px;top:467.45px;font-size:10px;color:#000;transform:scaleX(0.8200);">Balmora, Meldor: Armorer</div>
<div class="t" style="left:765.74px;top:467.45px;font-size:10px;color:#000;transform:scaleX(0.8200);">Interior</div>
<div class="t" style="left:819.82px;top:467.45px;font-size:10px;color:#000;transform:scaleX(0.8200);">121</div>
<div class="t" style="left:620.00px;top:478.38px;font-size:10px;color:#000;transform:scaleX(0.8200);">Balmora, Milie Hastien: Fine Clot...</div>
<div class="t" style="left:765.74px;top:478.38px;font-size:10px;color:#000;transform:scaleX(0.8200);">Interior</div>
<div class="t" style="left:819.82px;top:478.38px;font-size:10px;color:#000;transform:scaleX(0.8200);">148</div>
<div class="t" style="left:620.00px;top:489.31px;font-size:10px;color:#000;transform:scaleX(0.8200);">Balmora, Morag Tong Guild</div>
<div class="t" style="left:765.74px;top:489.31px;font-size:10px;color:#000;transform:scaleX(0.8200);">Interior</div>
<div class="t" style="left:819.82px;top:489.31px;font-size:10px;color:#000;transform:scaleX(0.8200);">234</div>
<div class="t" style="left:620.00px;top:500.24px;font-size:10px;color:#000;transform:scaleX(0.8200);">Balmora, Nalcarya of White Ha...</div>
<div class="t" style="left:765.74px;top:500.24px;font-size:10px;color:#000;transform:scaleX(0.8200);">Interior</div>
<div class="t" style="left:819.82px;top:500.24px;font-size:10px;color:#000;transform:scaleX(0.8200);">134</div>
<div class="t" style="left:620.00px;top:511.17px;font-size:10px;color:#000;transform:scaleX(0.8200);">Balmora, Nerano Manor</div>
<div class="t" style="left:765.74px;top:511.17px;font-size:10px;color:#000;transform:scaleX(0.8200);">Interior</div>
<div class="t" style="left:819.82px;top:511.17px;font-size:10px;color:#000;transform:scaleX(0.8200);">280</div>
<div class="t" style="left:620.00px;top:522.10px;font-size:10px;color:#000;transform:scaleX(0.8200);">Balmora, Nine Toes' House</div>
<div class="t" style="left:765.74px;top:522.10px;font-size:10px;color:#000;transform:scaleX(0.8200);">Interior</div>
<div class="t" style="left:824.38px;top:522.10px;font-size:10px;color:#000;transform:scaleX(0.8200);">92</div>
<div class="t" style="left:620.00px;top:533.02px;font-size:10px;color:#000;transform:scaleX(0.8200);">Balmora, Ra'Virr: Trader</div>
<div class="t" style="left:765.74px;top:533.02px;font-size:10px;color:#000;transform:scaleX(0.8200);">Interior</div>
<div class="t" style="left:819.82px;top:533.02px;font-size:10px;color:#000;transform:scaleX(0.8200);">155</div>
<div class="t" style="left:620.00px;top:543.95px;font-size:10px;color:#000;transform:scaleX(0.8200);">Balmora, Rarayn Radarys' House</div>
<div class="t" style="left:765.74px;top:543.95px;font-size:10px;color:#000;transform:scaleX(0.8200);">Interior</div>
<div class="t" style="left:824.38px;top:543.95px;font-size:10px;color:#000;transform:scaleX(0.8200);">95</div>
<div class="t" style="left:620.00px;top:554.88px;font-size:10px;color:#000;transform:scaleX(0.8200);">Balmora, Rithleen's House</div>
<div class="t" style="left:765.74px;top:554.88px;font-size:10px;color:#000;transform:scaleX(0.8200);">Interior</div>
<div class="t" style="left:824.38px;top:554.88px;font-size:10px;color:#000;transform:scaleX(0.8200);">61</div>
<div class="t" style="left:620.00px;top:565.82px;font-size:10px;color:#000;transform:scaleX(0.8200);">Balmora, Shop Andeno Telran</div>
<div class="t" style="left:763.00px;top:565.82px;font-size:10px;color:#000;transform:scaleX(0.8200);">Interior *</div>
<div class="t" style="left:819.82px;top:565.82px;font-size:10px;color:#000;transform:scaleX(0.8200);">141</div>
<div class="t" style="left:620.00px;top:576.75px;font-size:10px;color:#000;transform:scaleX(0.8200);">Balmora, South Wall Cornerclub</div>
<div class="t" style="left:765.74px;top:576.75px;font-size:10px;color:#000;transform:scaleX(0.8200);">Interior</div>
<div class="t" style="left:819.82px;top:576.75px;font-size:10px;color:#000;transform:scaleX(0.8200);">217</div>
</div></div>
<div style="left:617px;top:586px;width:546px;height:11px;background:#f0f0f0"></div>
<div style="left:630px;top:586.5px;width:420px;height:10px;background:#cdcdcd"></div>
<svg style="left:619px;top:587px" width="8" height="9" viewBox="0 0 8 9"><path d="M5.5 1 L2 4.5 L5.5 8" fill="none" stroke="#606060" stroke-width="1.3"/></svg>
<div style="left:1163px;top:391px;width:12px;height:209px;background:#f0f0f0;box-sizing:border-box;border-left:1px solid #e4e4e4;border-right:1px solid #e4e4e4"></div>
<div style="left:1164px;top:557px;width:10px;height:17px;background:#cdcdcd"></div>
<svg style="left:1164px;top:395px" width="10" height="8" viewBox="0 0 10 8"><path d="M1.5 6 L5 2.5 L8.5 6" fill="none" stroke="#606060" stroke-width="1.3"/></svg>
<svg style="left:1164px;top:575px" width="10" height="8" viewBox="0 0 10 8"><path d="M1.5 2 L5 5.5 L8.5 2" fill="none" stroke="#606060" stroke-width="1.3"/></svg>
<div style="left:393px;top:228px;width:413px;height:186px;background:#f0f0f0;box-shadow:0 0 6px rgba(0,0,0,.3);border:1px solid #c8c8c8;box-sizing:border-box"></div>
<div style="left:394px;top:229px;width:411px;height:21px;background:#fff"></div>
<div class="t" style="left:397.00px;top:233.41px;font-size:10.5px;color:#999;transform:scaleX(0.8892);">Container</div>
<div style="left:708px;top:238.5px;width:10px;height:1px;background:#999"></div>
<div style="left:744px;top:234px;width:9px;height:9px;box-sizing:border-box;border:1px solid #d6d6d6"></div>
<svg style="left:781px;top:234px" width="10" height="10" viewBox="0 0 10 10"><path d="M0.5 0.5 L9.5 9.5 M9.5 0.5 L0.5 9.5" stroke="#999" stroke-width="1"/></svg>
<div class="t" style="left:419.80px;top:259.54px;font-size:10px;color:#000;transform:scaleX(0.8200);">ID</div>
<div style="left:434px;top:258px;width:142px;height:14px;box-sizing:border-box;background:#fff;border-top:2px solid #8c8c8c;border-left:2px solid #8c8c8c;border-right:1px solid #fff;border-bottom:1px solid #fff"></div>
<div class="t" style="left:436.50px;top:260.04px;font-size:10px;color:#000;transform:scaleX(0.8200);">com_chest_RM</div>
<div class="t" style="left:406.13px;top:279.54px;font-size:10px;color:#000;transform:scaleX(0.8200);">Name</div>
<div style="left:434px;top:277px;width:142px;height:14px;box-sizing:border-box;background:#fff;border-top:2px solid #8c8c8c;border-left:2px solid #8c8c8c;border-right:1px solid #fff;border-bottom:1px solid #fff"></div>
<div class="t" style="left:436.50px;top:279.04px;font-size:10px;color:#000;transform:scaleX(0.8700);">Сундук торговца</div>
<div class="t" style="left:407.04px;top:298.04px;font-size:10px;color:#000;transform:scaleX(0.8200);">Script</div>
<div style="left:434px;top:295px;width:116px;height:15px;box-sizing:border-box;background:#fff;border-top:2px solid #8c8c8c;border-left:2px solid #8c8c8c;border-right:1px solid #fff;border-bottom:1px solid #fff"></div>
<div style="left:536px;top:297px;width:13px;height:12px;box-sizing:border-box;background:#f0f0f0;border-top:1px solid #c8c8c8;border-left:1px solid #b8b8b8;border-right:1px solid #696969;border-bottom:1px solid #696969;box-shadow:inset -1px -1px 0 #a0a0a0,inset 1px 1px 0 #fff"></div>
<svg style="left:539px;top:301px" width="7" height="4" viewBox="0 0 7 4"><path d="M0 0 H7 L3.5 4Z" fill="#000"/></svg>
<div style="left:558px;top:295px;width:18px;height:15px;box-sizing:border-box;background:#f0f0f0;border-top:1px solid #c8c8c8;border-left:1px solid #b8b8b8;border-right:1px solid #696969;border-bottom:1px solid #696969;box-shadow:inset -1px -1px 0 #a0a0a0,inset 1px 1px 0 #fff"></div>
<div class="t" style="left:563.58px;top:297.54px;font-size:10px;color:#000;transform:scaleX(0.8200);">...</div>
<div style="left:408px;top:320.5px;width:9px;height:9px;box-sizing:border-box;background:#fff;border:1px solid #555"></div>
<div class="t" style="left:422.00px;top:320.64px;font-size:10px;color:#000;transform:scaleX(0.8200);">Organic Container</div>
<div style="left:522.5px;top:320.5px;width:9px;height:9px;box-sizing:border-box;background:#f0f0f0;border:1px solid #c8c8c8"></div>
<div class="t" style="left:536.00px;top:320.64px;font-size:10px;color:#a0a0a0;transform:scaleX(0.8200);">Respawns</div>
<div class="t" style="left:408.50px;top:341.04px;font-size:10px;color:#000;transform:scaleX(0.8200);">Weight</div>
<div style="left:440px;top:338px;width:27px;height:15px;box-sizing:border-box;background:#fff;border-top:2px solid #8c8c8c;border-left:2px solid #8c8c8c;border-right:1px solid #fff;border-bottom:1px solid #fff"></div>
<div style="left:442px;top:340px;width:24px;height:12px;overflow:hidden">
<div style="left:-442px;top:-340px;width:1200px;height:675px">
<div class="t" style="left:443.00px;top:341.04px;font-size:10px;color:#000;transform:scaleX(0.8200);">500.00</div>
</div></div>
<div class="t" style="left:485.60px;top:341.04px;font-size:10px;color:#000;transform:scaleX(0.8200);">Encumbrance 27/500</div>
<div style="left:402px;top:361px;width:78px;height:18px;box-sizing:border-box;background:#f0f0f0;border-top:1px solid #c8c8c8;border-left:1px solid #b8b8b8;border-right:1px solid #696969;border-bottom:1px solid #696969;box-shadow:inset -1px -1px 0 #a0a0a0,inset 1px 1px 0 #fff"></div>
<div class="t" style="left:422.77px;top:365.14px;font-size:10px;color:#a0a0a0;transform:scaleX(0.8200);">Animation</div>
<div style="left:490px;top:365px;width:9px;height:9px;box-sizing:border-box;background:#fff;border:1px solid #555"></div>
<svg style="left:490px;top:365px" width="9" height="9" viewBox="0 0 9 9"><path d="M2 4.5 L3.8 6.5 L7 2.2" fill="none" stroke="#000" stroke-width="1.4"/></svg>
<div class="t" style="left:504.00px;top:365.54px;font-size:10px;color:#000;transform:scaleX(0.8200);">References Persist</div>
<div style="left:402px;top:383px;width:171px;height:22px;box-sizing:border-box;background:#f0f0f0;border-top:1px solid #c8c8c8;border-left:1px solid #b8b8b8;border-right:1px solid #696969;border-bottom:1px solid #696969;box-shadow:inset -1px -1px 0 #a0a0a0,inset 1px 1px 0 #fff"></div>
<div class="t" style="left:466.30px;top:389.14px;font-size:10px;color:#000;transform:scaleX(0.8200);">Add Art File</div>
<div style="left:586px;top:258px;width:211px;height:123px;box-sizing:border-box;background:#fff;border-top:2px solid #8c8c8c;border-left:2px solid #8c8c8c;border-right:1px solid #e8e8e8;border-bottom:1px solid #e8e8e8"></div>
<div style="left:588px;top:260px;width:208px;height:12px;background:#f0f0f0;box-sizing:border-box;border-bottom:2px solid #8c8c8c"></div>
<div style="left:616.5px;top:260px;width:2px;height:12px;background:#a0a0a0"></div>
<div style="left:734px;top:260px;width:2px;height:12px;background:#a0a0a0"></div>
<div style="left:781px;top:260px;width:2px;height:12px;background:#a0a0a0"></div>
<div class="t" style="left:591.00px;top:261.04px;font-size:10px;color:#000;transform:scaleX(0.8200);">Count</div>
<div class="t" style="left:623.00px;top:261.04px;font-size:10px;color:#000;transform:scaleX(0.8200);">Object ID</div>
<div class="t" style="left:749.11px;top:261.04px;font-size:10px;color:#000;transform:scaleX(0.8200);">Type</div>
<div style="left:588px;top:283.57px;width:208px;height:1px;background:#f0f0f0"></div>
<div style="left:588px;top:294.64px;width:208px;height:1px;background:#f0f0f0"></div>
<div style="left:588px;top:305.71px;width:208px;height:1px;background:#f0f0f0"></div>
<div style="left:588px;top:316.78px;width:208px;height:1px;background:#f0f0f0"></div>
<div style="left:588px;top:327.85px;width:208px;height:1px;background:#f0f0f0"></div>
<div style="left:588px;top:338.92px;width:208px;height:1px;background:#f0f0f0"></div>
<div style="left:588px;top:349.99px;width:208px;height:1px;background:#f0f0f0"></div>
<div style="left:588px;top:361.06px;width:208px;height:1px;background:#f0f0f0"></div>
<div style="left:588px;top:372.13px;width:208px;height:1px;background:#f0f0f0"></div>
<div style="left:588px;top:383.2px;width:208px;height:1px;background:#f0f0f0"></div>
<div style="left:618px;top:272px;width:1px;height:108px;background:#f0f0f0"></div>
<div style="left:735px;top:272px;width:1px;height:108px;background:#f0f0f0"></div>
<div style="left:781.5px;top:272px;width:1px;height:108px;background:#f0f0f0"></div>
<div class="t" style="left:590.00px;top:274.84px;font-size:10px;color:#000;transform:scaleX(0.8200);">1</div>
<div class="t" style="left:623.00px;top:274.84px;font-size:10px;color:#000;transform:scaleX(0.8200);">cruel flamesword</div>
<div class="t" style="left:743.30px;top:274.84px;font-size:10px;color:#000;transform:scaleX(0.8200);">Weapon</div>
<div class="t" style="left:590.00px;top:285.91px;font-size:10px;color:#000;transform:scaleX(0.8200);">1</div>
<div class="t" style="left:623.00px;top:285.91px;font-size:10px;color:#000;transform:scaleX(0.8200);">chitin spear</div>
<div class="t" style="left:743.30px;top:285.91px;font-size:10px;color:#000;transform:scaleX(0.8200);">Weapon</div>
<div class="t" style="left:590.00px;top:296.98px;font-size:10px;color:#000;transform:scaleX(0.8200);">1</div>
<div class="t" style="left:623.00px;top:296.98px;font-size:10px;color:#000;transform:scaleX(0.8200);">chitin war axe</div>
<div class="t" style="left:743.30px;top:296.98px;font-size:10px;color:#000;transform:scaleX(0.8200);">Weapon</div>
<div class="t" style="left:590.00px;top:308.05px;font-size:10px;color:#000;transform:scaleX(0.8200);">1</div>
<div class="t" style="left:623.00px;top:308.05px;font-size:10px;color:#000;transform:scaleX(0.8200);">cruel flamearrow</div>
<div class="t" style="left:743.30px;top:308.05px;font-size:10px;color:#000;transform:scaleX(0.8200);">Weapon</div>
<div style="left:605px;top:391.5px;width:9px;height:9px;box-sizing:border-box;background:#fff;border:1px solid #555"></div>
<div class="t" style="left:619.00px;top:391.84px;font-size:10px;color:#000;transform:scaleX(0.8200);">Blocked</div>
<div style="left:657px;top:388px;width:58px;height:17px;box-sizing:border-box;background:#f0f0f0;border-top:1px solid #c8c8c8;border-left:1px solid #b8b8b8;border-right:1px solid #696969;border-bottom:1px solid #696969;box-shadow:inset -1px -1px 0 #a0a0a0,inset 1px 1px 0 #fff"></div>
<div class="t" style="left:676.65px;top:391.64px;font-size:10px;color:#000;transform:scaleX(0.8200);">Save</div>
<div style="left:739px;top:388px;width:58px;height:17px;box-sizing:border-box;background:#f0f0f0;border-top:1px solid #c8c8c8;border-left:1px solid #b8b8b8;border-right:1px solid #696969;border-bottom:1px solid #696969;box-shadow:inset -1px -1px 0 #a0a0a0,inset 1px 1px 0 #fff"></div>
<div class="t" style="left:755.24px;top:391.64px;font-size:10px;color:#000;transform:scaleX(0.8200);">Cancel</div>
<div style="left:834px;top:226px;width:329px;height:393px;background:#f0f0f0;box-shadow:0 0 8px rgba(0,0,0,.35);border:1px solid #9a9a9a;box-sizing:border-box"></div>
<div style="left:835px;top:227px;width:327px;height:23px;background:#fff"></div>
<svg style="left:840px;top:232px" width="14" height="12" viewBox="0 0 14 12"><path d="M3.5 1 L9.5 7" stroke="#333" stroke-width="2.2"/><path d="M4 1.5 L9 6.5" stroke="#ddd" stroke-width="1"/><path d="M8.5 6 L10.5 8" stroke="#cc0" stroke-width="1.5"/><rect x="0.5" y="7" width="12" height="4" fill="#e00000"/><rect x="6.5" y="8.5" width="6" height="2" fill="#fff"/><path d="M1 11.5 H13" stroke="#222" stroke-width="1"/></svg>
<div class="t" style="left:856.30px;top:233.11px;font-size:10.5px;color:#000;transform:scaleX(0.8813);">Select NetImmerse Model</div>
<svg style="left:1145px;top:234px" width="9" height="9" viewBox="0 0 9 9"><path d="M0.5 0.5 L8.5 8.5 M8.5 0.5 L0.5 8.5" stroke="#333" stroke-width="1"/></svg>
<div class="t" style="left:843.00px;top:258.04px;font-size:10px;color:#222;transform:scaleX(0.9322);">Папка:</div>
<div style="left:877px;top:255px;width:172px;height:16px;box-sizing:border-box;background:#fff;border-top:2px solid #8c8c8c;border-left:2px solid #8c8c8c;border-right:1px solid #fff;border-bottom:1px solid #fff"></div>
<div style="left:883px;top:257px;width:10px;height:12px;background:#ffe080;border-left:1px solid #e8c050"></div>
<div class="t" style="left:896.00px;top:258.04px;font-size:10px;color:#000;transform:scaleX(0.8900);">f</div>
<div style="left:1036px;top:257px;width:12px;height:13px;box-sizing:border-box;background:#f0f0f0;border-top:1px solid #c8c8c8;border-left:1px solid #b8b8b8;border-right:1px solid #696969;border-bottom:1px solid #696969;box-shadow:inset -1px -1px 0 #a0a0a0,inset 1px 1px 0 #fff"></div>
<svg style="left:1039px;top:262px" width="7" height="4" viewBox="0 0 7 4"><path d="M0 0 H7 L3.5 4Z" fill="#000"/></svg>
<svg style="left:1054px;top:257px" width="12" height="10" viewBox="0 0 12 10"><path d="M1 5 L5 1.5 V3.5 H11 V6.5 H5 V8.5Z" fill="#00c0c0" stroke="#004040" stroke-width=".8"/></svg>
<svg style="left:1071px;top:256px" width="13" height="11" viewBox="0 0 13 11"><path d="M0.5 2 H5 L6 3 H12.5 V10.5 H0.5Z" fill="#f0f080" stroke="#404000" stroke-width=".9"/><path d="M6.5 9 V5.5 M5 7 L6.5 5 L8 7" fill="none" stroke="#000" stroke-width=".9"/></svg>
<svg style="left:1089px;top:255px" width="14" height="12" viewBox="0 0 14 12"><path d="M0.5 5 H4 L5 4 H9.5 V11.5 H0.5Z" fill="#f0f080" stroke="#404000" stroke-width=".9"/><path d="M11 0 V6 M8 3 H14 M9 1 L13 5 M13 1 L9 5" stroke="#505050" stroke-width=".6"/></svg>
<svg style="left:1108px;top:257px" width="22" height="11" viewBox="0 0 22 11"><rect x="0.5" y="0.5" width="12" height="10" fill="#dfe3ea" stroke="#505050" stroke-width="1"/><rect x="0.5" y="0.5" width="12" height="1.6" fill="#203870"/><path d="M2 4 H5 M2 6.5 H5 M2 9 H5 M7.5 4 H10.5 M7.5 6.5 H10.5 M7.5 9 H10.5" stroke="#3050c0" stroke-width="1.1" stroke-dasharray="1 1"/><path d="M15 4 H20 L17.5 7Z" fill="#000"/></svg>
<div style="left:839px;top:275px;width:319px;height:290px;background:#fff"></div>
<div style="left:1051px;top:275px;width:1px;height:290px;background:#eaf0f7"></div>
<svg style="left:941px;top:274px" width="9" height="5" viewBox="0 0 9 5"><path d="M0.5 4.5 L4.5 0.8 L8.5 4.5" fill="none" stroke="#888" stroke-width="1"/></svg>
<div class="t" style="left:843.00px;top:279.61px;font-size:10.5px;color:#1a1a1a;transform:scaleX(0.9290);">Имя</div>
<div class="t" style="left:1056.50px;top:279.61px;font-size:10.5px;color:#1a1a1a;transform:scaleX(0.8112);">Дата изменения</div>
<svg style="left:846px;top:295.10px" width="11" height="14" viewBox="0 0 11 14"><path d="M0.5 0.5 H7 L10.5 4 V13.5 H0.5Z" fill="#fff" stroke="#aaa" stroke-width="1"/><path d="M7 0.5 V4 H10.5" fill="none" stroke="#aaa" stroke-width="1"/></svg>
<div class="t" style="left:859.30px;top:297.31px;font-size:10.5px;color:#000;transform:scaleX(0.8562);">terrain_bc_scum_01_dist.nif</div>
<div class="t" style="left:1057.00px;top:297.31px;font-size:10.5px;color:#000;transform:scaleX(0.8113);">18.02.2011 0:46</div>
<svg style="left:846px;top:309.90px" width="11" height="14" viewBox="0 0 11 14"><path d="M0.5 0.5 H7 L10.5 4 V13.5 H0.5Z" fill="#fff" stroke="#aaa" stroke-width="1"/><path d="M7 0.5 V4 H10.5" fill="none" stroke="#aaa" stroke-width="1"/></svg>
<div class="t" style="left:859.30px;top:312.11px;font-size:10.5px;color:#000;transform:scaleX(0.8562);">terrain_bc_scum_02_dist.nif</div>
<div class="t" style="left:1057.00px;top:312.11px;font-size:10.5px;color:#000;transform:scaleX(0.8113);">18.02.2011 0:47</div>
<svg style="left:846px;top:324.70px" width="11" height="14" viewBox="0 0 11 14"><path d="M0.5 0.5 H7 L10.5 4 V13.5 H0.5Z" fill="#fff" stroke="#aaa" stroke-width="1"/><path d="M7 0.5 V4 H10.5" fill="none" stroke="#aaa" stroke-width="1"/></svg>
<div class="t" style="left:859.30px;top:326.91px;font-size:10.5px;color:#000;transform:scaleX(0.8562);">terrain_bc_scum_03_dist.nif</div>
<div class="t" style="left:1057.00px;top:326.91px;font-size:10.5px;color:#000;transform:scaleX(0.8113);">18.02.2011 0:47</div>
<div style="left:839px;top:552px;width:319px;height:13px;background:#f0f0f0"></div>
<div style="left:853px;top:552.5px;width:193px;height:12px;background:#cdcdcd"></div>
<svg style="left:842px;top:554px" width="8" height="9" viewBox="0 0 8 9"><path d="M5.5 1 L2 4.5 L5.5 8" fill="none" stroke="#606060" stroke-width="1.3"/></svg>
<svg style="left:1147px;top:554px" width="8" height="9" viewBox="0 0 8 9"><path d="M2.5 1 L6 4.5 L2.5 8" fill="none" stroke="#606060" stroke-width="1.3"/></svg>
<div class="t" style="left:842.00px;top:575.53px;font-size:10px;color:#222;transform:scaleX(0.8240);">Имя файла:</div>
<div style="left:898px;top:572.5px;width:181px;height:15px;box-sizing:border-box;background:#fff;border-top:2px solid #8c8c8c;border-left:2px solid #8c8c8c;border-right:1px solid #fff;border-bottom:1px solid #fff"></div>
<div style="left:1094px;top:572px;width:59px;height:18px;box-sizing:border-box;background:#f0f0f0;border:1px solid #3c3c3c;box-shadow:inset 1px 1px 0 #fff,inset -1px -1px 0 #8a8a8a"></div>
<div class="t" style="left:1106.42px;top:576.13px;font-size:10px;color:#000;transform:scaleX(0.8700);">Открыть</div>
<div class="t" style="left:842.00px;top:599.03px;font-size:10px;color:#222;transform:scaleX(0.8554);">Тип файлов:</div>
<div style="left:898px;top:596px;width:181px;height:16px;box-sizing:border-box;background:#fff;border-top:2px solid #8c8c8c;border-left:2px solid #8c8c8c;border-right:1px solid #fff;border-bottom:1px solid #fff"></div>
<div class="t" style="left:900.50px;top:599.83px;font-size:10px;color:#111;transform:scaleX(0.8136);">NetImmerse Models (*.NIF)</div>
<div style="left:1065px;top:598px;width:13px;height:13px;box-sizing:border-box;background:#f0f0f0;border-top:1px solid #c8c8c8;border-left:1px solid #b8b8b8;border-right:1px solid #696969;border-bottom:1px solid #696969;box-shadow:inset -1px -1px 0 #a0a0a0,inset 1px 1px 0 #fff"></div>
<svg style="left:1068px;top:603px" width="7" height="4" viewBox="0 0 7 4"><path d="M0 0 H7 L3.5 4Z" fill="#000"/></svg>
<div style="left:1094px;top:595px;width:59px;height:17px;box-sizing:border-box;background:#f0f0f0;border-top:1px solid #c8c8c8;border-left:1px solid #b8b8b8;border-right:1px solid #696969;border-bottom:1px solid #696969;box-shadow:inset -1px -1px 0 #a0a0a0,inset 1px 1px 0 #fff"></div>
<div class="t" style="left:1107.89px;top:598.63px;font-size:10px;color:#000;transform:scaleX(0.8700);">Отмена</div>
<svg style="left:1153px;top:608px" width="9" height="9" viewBox="0 0 9 9"><path d="M8.5 1 L1 8.5 M8.5 4 L4 8.5 M8.5 7 L7 8.5" stroke="#a0a0a0" stroke-width="1"/></svg>
</body></html>
